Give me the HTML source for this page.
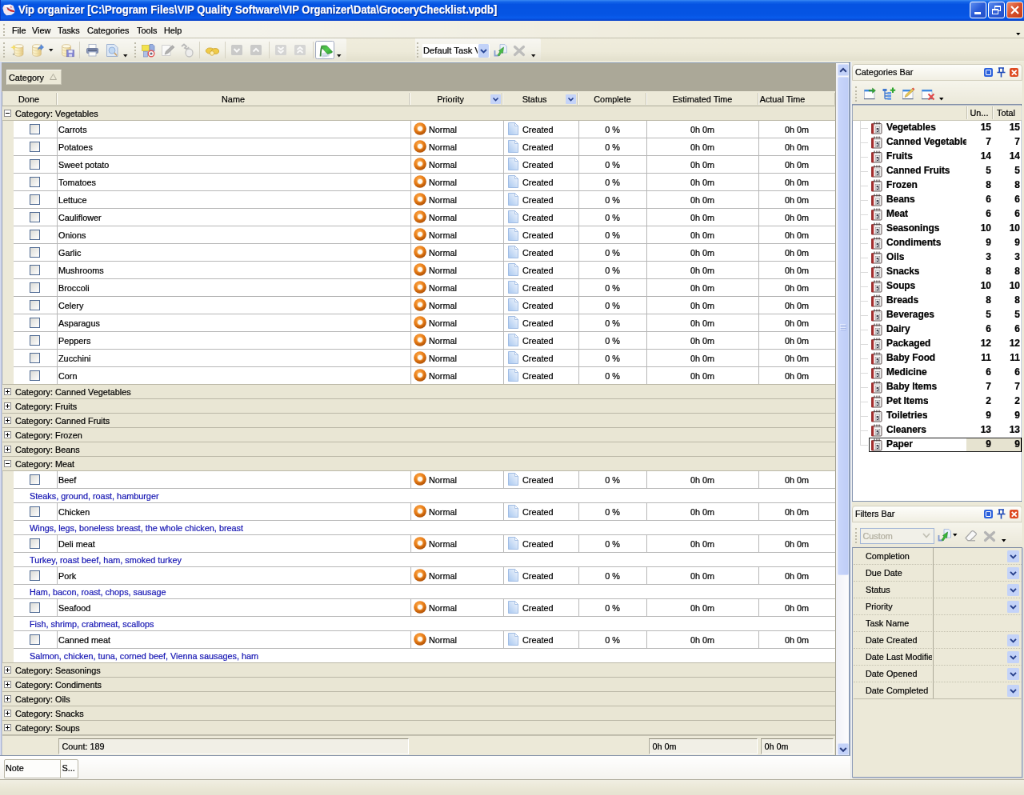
<!DOCTYPE html><html><head><meta charset="utf-8"><title>Vip organizer</title><style>
html,body{margin:0;padding:0;background:#ece9d8;overflow:hidden;}
body{width:1024px;height:795px;position:relative;}
#app{position:absolute;left:0;top:0;width:1280px;height:994px;transform:scale(.8);transform-origin:0 0;will-change:transform;font-family:"Liberation Sans",sans-serif;font-size:10.85px;color:#000;overflow:hidden;-webkit-text-stroke:0.22px;}
#app div,#app span{position:absolute;box-sizing:border-box;white-space:nowrap;}
.t{line-height:14px;height:14px;}
svg{position:absolute;overflow:visible;}
#title{left:0;top:0;width:1280px;height:25.5px;background:linear-gradient(#3a8af4 0,#1466ea 9%,#0553e2 22%,#0655e4 70%,#0a5cec 86%,#0746d2 97%,#0a3ec4 100%);border-left:1px solid #0838c0;}
#title .tt{left:22px;top:3.3px;color:#fff;font-weight:bold;font-size:14.4px;line-height:18px;height:18px;transform:scaleX(0.908);transform-origin:0 0;text-shadow:1px 1px 0 #0a2a8a;}
.wb{top:2px;width:21px;height:21px;border:1px solid #fff;border-radius:3px;background:linear-gradient(135deg,#5f8ff0,#2a5cd8 50%,#2450c8);}
#menu{left:0;top:25.5px;width:1280px;height:22.5px;background:linear-gradient(90deg,#f6f5ef 0,#f4f3eb 25%,#efecdc 70%);border-bottom:1px solid #c5c2b0;}
#tb{left:0;top:48px;width:1280px;height:29px;background:linear-gradient(#f0eddd,#edead9 60%,#e3e0cd);border-bottom:1px solid #efede0;}
.tbb{top:0;height:28px;background:linear-gradient(#f8f7f2,#f2f1e8 55%,#e6e3d4);border-radius:0 2px 2px 0;}
.grip{width:3px;border-left:2px dotted #bdbaa9;}
.sep{width:1px;background:#d6d3c4;}
.gl{background:#c0c0c0;}
.cat{left:2.5px;width:1042.5px;height:19px;margin-top:-1px;background:#e9e6d4;border-bottom:1px solid #bcb9a8;border-top:1px solid #bcb9a8;}
.row{left:17px;width:1028px;height:22px;background:#fff;border-bottom:1px solid #b8b8b8;}
.pv{left:17px;width:1028px;height:18px;background:#fff;border-bottom:1px solid #b8b8b8;color:#1717b4;}
.cb{left:20px;top:4px;width:13px;height:13px;border:1px solid #506b94;background:linear-gradient(135deg,#dcdcd7,#fff);}
.vl{top:0;width:1px;height:21px;background:#b8b8b8;}
.hd{top:114px;height:19px;background:#ece9d8;border-bottom:1px solid #c5c2b2;}
.dd{width:13px;height:12px;background:#c4d3f8;border-radius:1px;}
</style></head><body><div id="app">
<div id="title">
<svg style="left:2px;top:4.5px" width="16" height="15" viewBox="0 0 16 15"><path d="M2 1.2L10 0.4L13.5 2L15.6 8L14.8 11.2L11 13.8L5 14.2L1.8 11L0.3 5Z" fill="#f1e6ee"/><path d="M3 1.5L9 1L12 2.5L8 4L3 3.5Z" fill="#fdfbff"/><path d="M4.5 11.5L11 11.5L13 12.5L6 13.6Z" fill="#dfe6fb"/><path d="M5.5 4.6L9 6.4L14.8 8.2L15.2 10.2L10.5 9.4L6.6 7.2Z" fill="#c8242c"/><path d="M9.5 3L11 2.4L12 4.4L10.6 5Z" fill="#e0788a"/><path d="M5.6 4.4L8.5 5.8" stroke="#5a4a78" stroke-width="0.8"/></svg>
<span class="tt">Vip organizer [C:\Program Files\VIP Quality Software\VIP Organizer\Data\GroceryChecklist.vpdb]</span>
<div class="wb" style="left:1211px"><div style="left:5px;top:12px;width:8px;height:3px;background:#fff"></div></div>
<div class="wb" style="left:1234px"><div style="left:7px;top:4px;width:8px;height:7px;border:1px solid #fff;border-top-width:2px"></div><div style="left:4px;top:8px;width:8px;height:7px;border:1px solid #fff;border-top-width:2px;background:#3462d8"></div></div>
<div class="wb" style="left:1257px;background:linear-gradient(135deg,#ec8a6a,#d8502c 50%,#c43c18)"><svg style="left:4px;top:4px" width="11" height="11" viewBox="0 0 11 11"><path d="M1 1L10 10M10 1L1 10" stroke="#fff" stroke-width="2.2"/></svg></div>
</div>
<div id="menu">
<div class="grip" style="left:4px;top:4px;height:15px"></div>
<span class="t" style="left:15px;top:5.5px;">File</span>
<span class="t" style="left:40px;top:5.5px;">View</span>
<span class="t" style="left:72px;top:5.5px;">Tasks</span>
<span class="t" style="left:109px;top:5.5px;">Categories</span>
<span class="t" style="left:171px;top:5.5px;">Tools</span>
<span class="t" style="left:205px;top:5.5px;">Help</span>
<svg style="left:1270px;top:15px" width="5.5" height="3.2"><path d="M0 0H5.5L2.75 3.2Z" fill="#000"/></svg>
</div>
<div id="tb">
<div class="tbb" style="left:0;width:433px"></div><div class="tbb" style="left:519px;width:157px"></div>
<svg width="0" height="0"><defs><linearGradient id="cy" x1="0" x2="1"><stop offset="0" stop-color="#fdf6d6"/><stop offset="0.45" stop-color="#f8eab4"/><stop offset="1" stop-color="#e2c070"/></linearGradient><linearGradient id="dg" x1="1" y1="0" x2="0" y2="1"><stop offset="0" stop-color="#f4f8fe"/><stop offset="1" stop-color="#a9c8f0"/></linearGradient><radialGradient id="og" cx="0.4" cy="0.3" r="0.75"><stop offset="0" stop-color="#ffa848"/><stop offset="0.55" stop-color="#e67a14"/><stop offset="1" stop-color="#a84c04"/></radialGradient><linearGradient id="gb" x1="0" x2="1" y1="0" y2="1"><stop offset="0" stop-color="#2fa32c"/><stop offset="0.5" stop-color="#3fc63a"/><stop offset="1" stop-color="#148a18"/></linearGradient></defs></svg>
<div class="grip" style="left:4px;top:5px;height:19px"></div>
<svg style="left:14px;top:6.5px;opacity:.9" width="16" height="16" viewBox="0 0 16 16"><g transform="translate(3.6,0)"><path d="M0.6 2.8V12.8C0.6 14.4 3.2 15.3 6 15.3S11.4 14.4 11.4 12.8V2.8Z" fill="url(#cy)" stroke="#cdb274" stroke-width="0.7"/><ellipse cx="6" cy="2.8" rx="5.4" ry="2.1" fill="#fffbe6" stroke="#cdb274" stroke-width="0.7"/><path d="M0.6 6.3C0.6 7.9 3.2 8.7 6 8.7S11.4 7.9 11.4 6.3M0.6 9.7C0.6 11.3 3.2 12.1 6 12.1S11.4 11.3 11.4 9.7" fill="none" stroke="#e2cc8c" stroke-width="0.7"/></g><path d="M3 0.5L4 3.2L6.8 4.2L4 5.2L3 8L2 5.2L-0.8 4.2L2 3.2Z" fill="#f6dc58"/><path d="M1.5 13L3.6 11.5V14Z" fill="#8a8a78"/></svg>
<svg style="left:40px;top:6.5px;opacity:.9" width="16" height="16" viewBox="0 0 16 16"><path d="M0.6 2.8V12.8C0.6 14.4 3.2 15.3 6 15.3S11.4 14.4 11.4 12.8V2.8Z" fill="url(#cy)" stroke="#cdb274" stroke-width="0.7"/><ellipse cx="6" cy="2.8" rx="5.4" ry="2.1" fill="#fffbe6" stroke="#cdb274" stroke-width="0.7"/><path d="M0.6 6.3C0.6 7.9 3.2 8.7 6 8.7S11.4 7.9 11.4 6.3M0.6 9.7C0.6 11.3 3.2 12.1 6 12.1S11.4 11.3 11.4 9.7" fill="none" stroke="#e2cc8c" stroke-width="0.7"/><path d="M7.5 7C8 4.4 9.6 3 11 2.8V0.6L14.6 4L11 7.4V5.3C9.6 5.4 8.4 6 7.5 7Z" fill="#4a84dc" stroke="#2f5eb0" stroke-width="0.5"/></svg>
<svg style="left:61px;top:13px;opacity:.9" width="5.5" height="3.5" viewBox="0 0 5.5 3.5"><path d="M0 0H5.5L2.75 3.5Z" fill="#000"/></svg>
<svg style="left:77px;top:6.5px;opacity:.9" width="16" height="16" viewBox="0 0 16 16"><path d="M0.6 2.8V12.8C0.6 14.4 3.2 15.3 6 15.3S11.4 14.4 11.4 12.8V2.8Z" fill="url(#cy)" stroke="#cdb274" stroke-width="0.7"/><ellipse cx="6" cy="2.8" rx="5.4" ry="2.1" fill="#fffbe6" stroke="#cdb274" stroke-width="0.7"/><path d="M0.6 6.3C0.6 7.9 3.2 8.7 6 8.7S11.4 7.9 11.4 6.3M0.6 9.7C0.6 11.3 3.2 12.1 6 12.1S11.4 11.3 11.4 9.7" fill="none" stroke="#e2cc8c" stroke-width="0.7"/><rect x="6.6" y="7.6" width="9" height="8.2" fill="#7c7fd4" stroke="#5558a8" stroke-width="0.6"/><rect x="8.6" y="7.9" width="5" height="3" fill="#eeeefa"/><rect x="9.2" y="12.6" width="3.8" height="3" fill="#d8d8f0"/></svg>
<svg style="left:108px;top:7px;opacity:.9" width="15" height="16" viewBox="0 0 15 16"><rect x="3" y="0.5" width="9" height="5" fill="#fff" stroke="#9aa6c0" stroke-width="0.8"/><rect x="0.5" y="5.5" width="14" height="6" rx="1" fill="#7f8fb8" stroke="#56648c" stroke-width="0.8"/><rect x="2" y="7" width="11" height="1.5" fill="#3d4868"/><rect x="3" y="10" width="9" height="5" fill="#fff" stroke="#9aa6c0" stroke-width="0.8"/></svg>
<svg style="left:133px;top:7px;opacity:.9" width="15" height="16" viewBox="0 0 15 16"><path d="M0.5 0.5H10L14 4.5V15.5H0.5Z" fill="#dce8f8" stroke="#8fa6cc" stroke-width="0.9"/><circle cx="7" cy="8" r="4" fill="#bcd6f4" stroke="#86a8d8" stroke-width="0.9"/><path d="M10 11L13 14.5" stroke="#c89858" stroke-width="1.6"/></svg>
<svg style="left:153.5px;top:20px;opacity:.9" width="5.5" height="3.5" viewBox="0 0 5.5 3.5"><path d="M0 0H5.5L2.75 3.5Z" fill="#000"/></svg>
<div class="grip" style="left:168px;top:5px;height:19px"></div>
<svg style="left:177px;top:6.5px;opacity:.9" width="17" height="17" viewBox="0 0 17 17"><rect x="0.5" y="1.5" width="9" height="7" fill="#f4e23c" stroke="#c8b020" stroke-width="0.7"/><path d="M10 0.5H14L16 2.5V9H10Z" fill="#8fa8e0" stroke="#5f78b8" stroke-width="0.7"/><rect x="2.5" y="9.5" width="5" height="6.5" fill="#a8bce8" stroke="#6f88c0" stroke-width="0.7"/><circle cx="12" cy="12" r="3.8" fill="#fff" stroke="#e04848" stroke-width="1.4"/><circle cx="12" cy="12" r="1.6" fill="#5a5a70"/></svg>
<svg style="left:201.5px;top:7.5px;opacity:.9" width="17" height="14" viewBox="0 0 17 14"><path d="M0.5 0.5H11V13.5H0.5Z" fill="#fbfbfb" stroke="#c8c8c8" stroke-width="0.9"/><path d="M4 12L5.5 8L13.5 0.8L16 3L8 10.5Z" fill="#a9a9a9" stroke="#8c8c8c" stroke-width="0.6"/></svg>
<svg style="left:226px;top:6.5px;opacity:.9" width="16" height="17" viewBox="0 0 16 17"><path d="M1 3L4 0.5L7 3L5 5L8 6.5L10 4" fill="none" stroke="#b4b4b4" stroke-width="1.8"/><ellipse cx="10.5" cy="11" rx="4.5" ry="5" fill="#eeeeee" stroke="#bdbdbd" stroke-width="1.3"/></svg>
<div class="sep" style="left:99px;top:4px;height:21px"></div>
<div class="sep" style="left:249px;top:4px;height:21px"></div>
<svg style="left:256.5px;top:10.5px;opacity:.9" width="17" height="11" viewBox="0 0 17 11"><ellipse cx="5.5" cy="4.5" rx="5.2" ry="3.6" fill="#f0c838" stroke="#c89818" stroke-width="0.8"/><ellipse cx="12" cy="5" rx="4.6" ry="3.4" fill="#f0c838" stroke="#c89818" stroke-width="0.8"/><ellipse cx="8" cy="7.5" rx="2.6" ry="2.8" fill="#fff0b0" stroke="#c89818" stroke-width="0.7"/></svg>
<div class="sep" style="left:280.5px;top:4px;height:21px"></div>
<svg style="left:289px;top:8px;opacity:.9" width="14" height="13" viewBox="0 0 14 13"><rect x="0" y="0" width="14" height="13" rx="1.5" fill="#c6c6c6"/><path d="M3.5 5L7 8.5L10.5 5" fill="none" stroke="#fbfbfb" stroke-width="2"/></svg>
<svg style="left:313px;top:8px;opacity:.9" width="14" height="13" viewBox="0 0 14 13"><rect x="0" y="0" width="14" height="13" rx="1.5" fill="#c6c6c6"/><path d="M3.5 8.5L7 5L10.5 8.5" fill="none" stroke="#fbfbfb" stroke-width="2"/></svg>
<div class="sep" style="left:335.5px;top:4px;height:21px"></div>
<svg style="left:344px;top:8px;opacity:.9" width="14" height="13" viewBox="0 0 14 13"><rect x="0" y="0" width="14" height="13" rx="1.5" fill="#d2d2d2"/><path d="M3.5 3L7 6L10.5 3M3.5 7L7 10L10.5 7" fill="none" stroke="#fbfbfb" stroke-width="2"/></svg>
<svg style="left:368px;top:8px;opacity:.9" width="14" height="13" viewBox="0 0 14 13"><rect x="0" y="0" width="14" height="13" rx="1.5" fill="#d2d2d2"/><path d="M3.5 6L7 3L10.5 6M3.5 10L7 7L10.5 10" fill="none" stroke="#fbfbfb" stroke-width="2"/></svg>
<div class="sep" style="left:391px;top:4px;height:21px"></div>
<div style="left:393.8px;top:3.3px;width:24.2px;height:23px;background:#fff;border:1px solid #a0a9bf;border-radius:2.5px"></div>
<svg style="left:398.5px;top:9px;opacity:.9" width="17" height="15" viewBox="0 0 17 15"><path d="M3.4 9.9L11 8.5L12.6 10.4L12 13L3.8 14.3Z" fill="#dfe7f2" stroke="#aab8cc" stroke-width="0.5"/><path d="M4.5 12H11M4.5 13H10" stroke="#9fb0c8" stroke-width="0.5"/><path d="M2.5 0.7C1.6 3 1.2 6 0.7 13.4L2.5 13.4C2.7 9 3 6 3.8 3.3Z" fill="#1d7a20"/><path d="M2.5 0.4C4 -0.2 8 -0.2 9.5 0.2L16.6 7.7L15.7 9L10.5 10.6L3.8 3.3Z" fill="url(#gb)" stroke="#167018" stroke-width="0.6"/></svg>
<svg style="left:421px;top:19.75px;opacity:.9" width="5.5" height="3.5" viewBox="0 0 5.5 3.5"><path d="M0 0H5.5L2.75 3.5Z" fill="#000"/></svg>
<div class="grip" style="left:521px;top:5px;height:19px"></div>
<div style="left:527.5px;top:6.5px;width:84px;height:17.5px;background:#fff"></div>
<span class="t" style="left:529px;top:7.8px;font-size:11.2px;max-width:68px;overflow:hidden">Default Task V</span>
<div style="left:597.5px;top:7px;width:13.5px;height:16.5px;background:#c2d2f8;border-radius:1.5px"><svg style="left:2.5px;top:5.5px" width="9" height="6"><path d="M1 1L4.5 4.5L8 1" fill="none" stroke="#2a4898" stroke-width="1.9"/></svg></div>
<svg style="left:617px;top:6.5px;opacity:.9" width="17" height="17" viewBox="0 0 17 17"><path d="M8 0.5H14L16.5 3V11H8Z" fill="#e8f0fb" stroke="#9fb4d8" stroke-width="0.8"/><path d="M1.5 8V14.5H6" fill="none" stroke="#7f98d0" stroke-width="1.8"/><path d="M5 14L8 9.5L6.5 8.5L12.5 4L11.5 11.5L10 10.5L7 15Z" fill="#38b838" stroke="#1c7a1c" stroke-width="0.6"/></svg>
<svg style="left:641.5px;top:9px;opacity:.9" width="14" height="13" viewBox="0 0 14 13"><path d="M1.5 1.5L12.5 11.5M12.5 1.5L1.5 11.5" stroke="#b8b8b8" stroke-width="3.2" stroke-linecap="round"/></svg>
<svg style="left:664px;top:19.5px;opacity:.9" width="5.5" height="3.5" viewBox="0 0 5.5 3.5"><path d="M0 0H5.5L2.75 3.5Z" fill="#000"/></svg>
</div>
<div style="left:0;top:77px;width:1.6px;height:867px;background:#d3d9ee"></div><div style="left:1.5px;top:77.5px;width:1px;height:867px;background:#8e9bb8"></div><div style="left:1.5px;top:77.5px;width:1062px;height:1.4px;background:#8fa1ba"></div>
<div style="left:2px;top:79px;width:1043px;height:36px;background:#aba898"></div>
<div style="left:8px;top:87px;width:69px;height:19px;background:#ece9d8;border:1px solid #f8f7f0;border-right-color:#c8c5b5;border-bottom-color:#c8c5b5"></div>
<span class="t" style="left:11px;top:90px;">Category</span>
<svg style="left:62px;top:92px" width="9" height="8"><path d="M4.5 0.5L8.5 7.5H0.5Z" fill="#ece9d8" stroke="#b0ad9d"/></svg>
<div class="hd" style="left:3px;width:1042px"></div>
<div style="left:70px;top:116px;width:1px;height:15px;background:#c5c2b2"></div><div style="left:71px;top:116px;width:1px;height:15px;background:#fff"></div>
<div style="left:511px;top:116px;width:1px;height:15px;background:#c5c2b2"></div><div style="left:512px;top:116px;width:1px;height:15px;background:#fff"></div>
<div style="left:627px;top:116px;width:1px;height:15px;background:#c5c2b2"></div><div style="left:628px;top:116px;width:1px;height:15px;background:#fff"></div>
<div style="left:721px;top:116px;width:1px;height:15px;background:#c5c2b2"></div><div style="left:722px;top:116px;width:1px;height:15px;background:#fff"></div>
<div style="left:807px;top:116px;width:1px;height:15px;background:#c5c2b2"></div><div style="left:808px;top:116px;width:1px;height:15px;background:#fff"></div>
<div style="left:947px;top:116px;width:1px;height:15px;background:#c5c2b2"></div><div style="left:948px;top:116px;width:1px;height:15px;background:#fff"></div>
<div style="left:1043px;top:116px;width:1px;height:15px;background:#c5c2b2"></div><div style="left:1044px;top:116px;width:1px;height:15px;background:#fff"></div>
<span class="t" style="left:2px;width:68px;top:116.5px;text-align:center;">Done</span>
<span class="t" style="left:71px;width:441px;top:116.5px;text-align:center;">Name</span>
<span class="t" style="left:513px;width:100px;top:116.5px;text-align:center;">Priority</span>
<span class="t" style="left:629px;width:78px;top:116.5px;text-align:center;">Status</span>
<span class="t" style="left:723px;width:85px;top:116.5px;text-align:center;">Complete</span>
<span class="t" style="left:808px;width:140px;top:116.5px;text-align:center;">Estimated Time</span>
<span class="t" style="left:948px;width:60px;top:116.5px;text-align:center;">Actual Time</span>
<div class="dd" style="left:613px;top:118px"><svg style="left:3px;top:4px" width="7" height="5"><path d="M0.5 0.5L3.5 3.5L6.5 0.5" fill="none" stroke="#27408b" stroke-width="1.6"/></svg></div>
<div class="dd" style="left:707px;top:118px"><svg style="left:3px;top:4px" width="7" height="5"><path d="M0.5 0.5L3.5 3.5L6.5 0.5" fill="none" stroke="#27408b" stroke-width="1.6"/></svg></div>
<div class="cat" style="top:133px">
<div style="left:2.5px;top:3.5px;width:9px;height:9px;border:1px solid #8c8c8c;background:#fff"><div style="left:1px;top:3px;width:5px;height:1px;background:#000"></div></div>
<span class="t" style="left:16.5px;top:1.5px;">Category: Vegetables</span>
</div>
<div class="row" style="top:151px">
<div class="cb"></div>
<div class="vl" style="left:53.5px"></div>
<div class="vl" style="left:496px"></div>
<div class="vl" style="left:612px"></div>
<div class="vl" style="left:706px"></div>
<div class="vl" style="left:791px"></div>
<div class="vl" style="left:931px"></div>
<span class="t" style="left:56px;top:4px;">Carrots</span>
<svg style="left:500px;top:1.8px" width="16" height="16" viewBox="0 0 16 16"><circle cx="8" cy="8" r="7.8" fill="url(#og)"/><circle cx="8" cy="7.8" r="3.1" fill="#fffaf0"/><circle cx="8" cy="7.8" r="3.6" fill="none" stroke="#f8c080" stroke-width="0.8" opacity="0.7"/></svg>
<span class="t" style="left:519px;top:3.6px;">Normal</span>
<svg style="left:618px;top:2.2px" width="13" height="16" viewBox="0 0 13 16"><path d="M0.5 0.5H8.5L12.5 4.5V15.5H0.5Z" fill="url(#dg)" stroke="#9ab8e2" stroke-width="0.9"/><path d="M8.5 0.5V4.5H12.5Z" fill="#fff" stroke="#9ab8e2" stroke-width="0.8"/></svg>
<span class="t" style="left:636px;top:3.6px;">Created</span>
<span class="t" style="left:706px;width:85px;top:3.7px;text-align:center;">0 %</span>
<span class="t" style="left:791px;width:140px;top:3.7px;text-align:center;">0h 0m</span>
<span class="t" style="left:931px;width:96px;top:3.7px;text-align:center;">0h 0m</span>
</div>
<div class="row" style="top:173px">
<div class="cb"></div>
<div class="vl" style="left:53.5px"></div>
<div class="vl" style="left:496px"></div>
<div class="vl" style="left:612px"></div>
<div class="vl" style="left:706px"></div>
<div class="vl" style="left:791px"></div>
<div class="vl" style="left:931px"></div>
<span class="t" style="left:56px;top:4px;">Potatoes</span>
<svg style="left:500px;top:1.8px" width="16" height="16" viewBox="0 0 16 16"><circle cx="8" cy="8" r="7.8" fill="url(#og)"/><circle cx="8" cy="7.8" r="3.1" fill="#fffaf0"/><circle cx="8" cy="7.8" r="3.6" fill="none" stroke="#f8c080" stroke-width="0.8" opacity="0.7"/></svg>
<span class="t" style="left:519px;top:3.6px;">Normal</span>
<svg style="left:618px;top:2.2px" width="13" height="16" viewBox="0 0 13 16"><path d="M0.5 0.5H8.5L12.5 4.5V15.5H0.5Z" fill="url(#dg)" stroke="#9ab8e2" stroke-width="0.9"/><path d="M8.5 0.5V4.5H12.5Z" fill="#fff" stroke="#9ab8e2" stroke-width="0.8"/></svg>
<span class="t" style="left:636px;top:3.6px;">Created</span>
<span class="t" style="left:706px;width:85px;top:3.7px;text-align:center;">0 %</span>
<span class="t" style="left:791px;width:140px;top:3.7px;text-align:center;">0h 0m</span>
<span class="t" style="left:931px;width:96px;top:3.7px;text-align:center;">0h 0m</span>
</div>
<div class="row" style="top:195px">
<div class="cb"></div>
<div class="vl" style="left:53.5px"></div>
<div class="vl" style="left:496px"></div>
<div class="vl" style="left:612px"></div>
<div class="vl" style="left:706px"></div>
<div class="vl" style="left:791px"></div>
<div class="vl" style="left:931px"></div>
<span class="t" style="left:56px;top:4px;">Sweet potato</span>
<svg style="left:500px;top:1.8px" width="16" height="16" viewBox="0 0 16 16"><circle cx="8" cy="8" r="7.8" fill="url(#og)"/><circle cx="8" cy="7.8" r="3.1" fill="#fffaf0"/><circle cx="8" cy="7.8" r="3.6" fill="none" stroke="#f8c080" stroke-width="0.8" opacity="0.7"/></svg>
<span class="t" style="left:519px;top:3.6px;">Normal</span>
<svg style="left:618px;top:2.2px" width="13" height="16" viewBox="0 0 13 16"><path d="M0.5 0.5H8.5L12.5 4.5V15.5H0.5Z" fill="url(#dg)" stroke="#9ab8e2" stroke-width="0.9"/><path d="M8.5 0.5V4.5H12.5Z" fill="#fff" stroke="#9ab8e2" stroke-width="0.8"/></svg>
<span class="t" style="left:636px;top:3.6px;">Created</span>
<span class="t" style="left:706px;width:85px;top:3.7px;text-align:center;">0 %</span>
<span class="t" style="left:791px;width:140px;top:3.7px;text-align:center;">0h 0m</span>
<span class="t" style="left:931px;width:96px;top:3.7px;text-align:center;">0h 0m</span>
</div>
<div class="row" style="top:217px">
<div class="cb"></div>
<div class="vl" style="left:53.5px"></div>
<div class="vl" style="left:496px"></div>
<div class="vl" style="left:612px"></div>
<div class="vl" style="left:706px"></div>
<div class="vl" style="left:791px"></div>
<div class="vl" style="left:931px"></div>
<span class="t" style="left:56px;top:4px;">Tomatoes</span>
<svg style="left:500px;top:1.8px" width="16" height="16" viewBox="0 0 16 16"><circle cx="8" cy="8" r="7.8" fill="url(#og)"/><circle cx="8" cy="7.8" r="3.1" fill="#fffaf0"/><circle cx="8" cy="7.8" r="3.6" fill="none" stroke="#f8c080" stroke-width="0.8" opacity="0.7"/></svg>
<span class="t" style="left:519px;top:3.6px;">Normal</span>
<svg style="left:618px;top:2.2px" width="13" height="16" viewBox="0 0 13 16"><path d="M0.5 0.5H8.5L12.5 4.5V15.5H0.5Z" fill="url(#dg)" stroke="#9ab8e2" stroke-width="0.9"/><path d="M8.5 0.5V4.5H12.5Z" fill="#fff" stroke="#9ab8e2" stroke-width="0.8"/></svg>
<span class="t" style="left:636px;top:3.6px;">Created</span>
<span class="t" style="left:706px;width:85px;top:3.7px;text-align:center;">0 %</span>
<span class="t" style="left:791px;width:140px;top:3.7px;text-align:center;">0h 0m</span>
<span class="t" style="left:931px;width:96px;top:3.7px;text-align:center;">0h 0m</span>
</div>
<div class="row" style="top:239px">
<div class="cb"></div>
<div class="vl" style="left:53.5px"></div>
<div class="vl" style="left:496px"></div>
<div class="vl" style="left:612px"></div>
<div class="vl" style="left:706px"></div>
<div class="vl" style="left:791px"></div>
<div class="vl" style="left:931px"></div>
<span class="t" style="left:56px;top:4px;">Lettuce</span>
<svg style="left:500px;top:1.8px" width="16" height="16" viewBox="0 0 16 16"><circle cx="8" cy="8" r="7.8" fill="url(#og)"/><circle cx="8" cy="7.8" r="3.1" fill="#fffaf0"/><circle cx="8" cy="7.8" r="3.6" fill="none" stroke="#f8c080" stroke-width="0.8" opacity="0.7"/></svg>
<span class="t" style="left:519px;top:3.6px;">Normal</span>
<svg style="left:618px;top:2.2px" width="13" height="16" viewBox="0 0 13 16"><path d="M0.5 0.5H8.5L12.5 4.5V15.5H0.5Z" fill="url(#dg)" stroke="#9ab8e2" stroke-width="0.9"/><path d="M8.5 0.5V4.5H12.5Z" fill="#fff" stroke="#9ab8e2" stroke-width="0.8"/></svg>
<span class="t" style="left:636px;top:3.6px;">Created</span>
<span class="t" style="left:706px;width:85px;top:3.7px;text-align:center;">0 %</span>
<span class="t" style="left:791px;width:140px;top:3.7px;text-align:center;">0h 0m</span>
<span class="t" style="left:931px;width:96px;top:3.7px;text-align:center;">0h 0m</span>
</div>
<div class="row" style="top:261px">
<div class="cb"></div>
<div class="vl" style="left:53.5px"></div>
<div class="vl" style="left:496px"></div>
<div class="vl" style="left:612px"></div>
<div class="vl" style="left:706px"></div>
<div class="vl" style="left:791px"></div>
<div class="vl" style="left:931px"></div>
<span class="t" style="left:56px;top:4px;">Cauliflower</span>
<svg style="left:500px;top:1.8px" width="16" height="16" viewBox="0 0 16 16"><circle cx="8" cy="8" r="7.8" fill="url(#og)"/><circle cx="8" cy="7.8" r="3.1" fill="#fffaf0"/><circle cx="8" cy="7.8" r="3.6" fill="none" stroke="#f8c080" stroke-width="0.8" opacity="0.7"/></svg>
<span class="t" style="left:519px;top:3.6px;">Normal</span>
<svg style="left:618px;top:2.2px" width="13" height="16" viewBox="0 0 13 16"><path d="M0.5 0.5H8.5L12.5 4.5V15.5H0.5Z" fill="url(#dg)" stroke="#9ab8e2" stroke-width="0.9"/><path d="M8.5 0.5V4.5H12.5Z" fill="#fff" stroke="#9ab8e2" stroke-width="0.8"/></svg>
<span class="t" style="left:636px;top:3.6px;">Created</span>
<span class="t" style="left:706px;width:85px;top:3.7px;text-align:center;">0 %</span>
<span class="t" style="left:791px;width:140px;top:3.7px;text-align:center;">0h 0m</span>
<span class="t" style="left:931px;width:96px;top:3.7px;text-align:center;">0h 0m</span>
</div>
<div class="row" style="top:283px">
<div class="cb"></div>
<div class="vl" style="left:53.5px"></div>
<div class="vl" style="left:496px"></div>
<div class="vl" style="left:612px"></div>
<div class="vl" style="left:706px"></div>
<div class="vl" style="left:791px"></div>
<div class="vl" style="left:931px"></div>
<span class="t" style="left:56px;top:4px;">Onions</span>
<svg style="left:500px;top:1.8px" width="16" height="16" viewBox="0 0 16 16"><circle cx="8" cy="8" r="7.8" fill="url(#og)"/><circle cx="8" cy="7.8" r="3.1" fill="#fffaf0"/><circle cx="8" cy="7.8" r="3.6" fill="none" stroke="#f8c080" stroke-width="0.8" opacity="0.7"/></svg>
<span class="t" style="left:519px;top:3.6px;">Normal</span>
<svg style="left:618px;top:2.2px" width="13" height="16" viewBox="0 0 13 16"><path d="M0.5 0.5H8.5L12.5 4.5V15.5H0.5Z" fill="url(#dg)" stroke="#9ab8e2" stroke-width="0.9"/><path d="M8.5 0.5V4.5H12.5Z" fill="#fff" stroke="#9ab8e2" stroke-width="0.8"/></svg>
<span class="t" style="left:636px;top:3.6px;">Created</span>
<span class="t" style="left:706px;width:85px;top:3.7px;text-align:center;">0 %</span>
<span class="t" style="left:791px;width:140px;top:3.7px;text-align:center;">0h 0m</span>
<span class="t" style="left:931px;width:96px;top:3.7px;text-align:center;">0h 0m</span>
</div>
<div class="row" style="top:305px">
<div class="cb"></div>
<div class="vl" style="left:53.5px"></div>
<div class="vl" style="left:496px"></div>
<div class="vl" style="left:612px"></div>
<div class="vl" style="left:706px"></div>
<div class="vl" style="left:791px"></div>
<div class="vl" style="left:931px"></div>
<span class="t" style="left:56px;top:4px;">Garlic</span>
<svg style="left:500px;top:1.8px" width="16" height="16" viewBox="0 0 16 16"><circle cx="8" cy="8" r="7.8" fill="url(#og)"/><circle cx="8" cy="7.8" r="3.1" fill="#fffaf0"/><circle cx="8" cy="7.8" r="3.6" fill="none" stroke="#f8c080" stroke-width="0.8" opacity="0.7"/></svg>
<span class="t" style="left:519px;top:3.6px;">Normal</span>
<svg style="left:618px;top:2.2px" width="13" height="16" viewBox="0 0 13 16"><path d="M0.5 0.5H8.5L12.5 4.5V15.5H0.5Z" fill="url(#dg)" stroke="#9ab8e2" stroke-width="0.9"/><path d="M8.5 0.5V4.5H12.5Z" fill="#fff" stroke="#9ab8e2" stroke-width="0.8"/></svg>
<span class="t" style="left:636px;top:3.6px;">Created</span>
<span class="t" style="left:706px;width:85px;top:3.7px;text-align:center;">0 %</span>
<span class="t" style="left:791px;width:140px;top:3.7px;text-align:center;">0h 0m</span>
<span class="t" style="left:931px;width:96px;top:3.7px;text-align:center;">0h 0m</span>
</div>
<div class="row" style="top:327px">
<div class="cb"></div>
<div class="vl" style="left:53.5px"></div>
<div class="vl" style="left:496px"></div>
<div class="vl" style="left:612px"></div>
<div class="vl" style="left:706px"></div>
<div class="vl" style="left:791px"></div>
<div class="vl" style="left:931px"></div>
<span class="t" style="left:56px;top:4px;">Mushrooms</span>
<svg style="left:500px;top:1.8px" width="16" height="16" viewBox="0 0 16 16"><circle cx="8" cy="8" r="7.8" fill="url(#og)"/><circle cx="8" cy="7.8" r="3.1" fill="#fffaf0"/><circle cx="8" cy="7.8" r="3.6" fill="none" stroke="#f8c080" stroke-width="0.8" opacity="0.7"/></svg>
<span class="t" style="left:519px;top:3.6px;">Normal</span>
<svg style="left:618px;top:2.2px" width="13" height="16" viewBox="0 0 13 16"><path d="M0.5 0.5H8.5L12.5 4.5V15.5H0.5Z" fill="url(#dg)" stroke="#9ab8e2" stroke-width="0.9"/><path d="M8.5 0.5V4.5H12.5Z" fill="#fff" stroke="#9ab8e2" stroke-width="0.8"/></svg>
<span class="t" style="left:636px;top:3.6px;">Created</span>
<span class="t" style="left:706px;width:85px;top:3.7px;text-align:center;">0 %</span>
<span class="t" style="left:791px;width:140px;top:3.7px;text-align:center;">0h 0m</span>
<span class="t" style="left:931px;width:96px;top:3.7px;text-align:center;">0h 0m</span>
</div>
<div class="row" style="top:349px">
<div class="cb"></div>
<div class="vl" style="left:53.5px"></div>
<div class="vl" style="left:496px"></div>
<div class="vl" style="left:612px"></div>
<div class="vl" style="left:706px"></div>
<div class="vl" style="left:791px"></div>
<div class="vl" style="left:931px"></div>
<span class="t" style="left:56px;top:4px;">Broccoli</span>
<svg style="left:500px;top:1.8px" width="16" height="16" viewBox="0 0 16 16"><circle cx="8" cy="8" r="7.8" fill="url(#og)"/><circle cx="8" cy="7.8" r="3.1" fill="#fffaf0"/><circle cx="8" cy="7.8" r="3.6" fill="none" stroke="#f8c080" stroke-width="0.8" opacity="0.7"/></svg>
<span class="t" style="left:519px;top:3.6px;">Normal</span>
<svg style="left:618px;top:2.2px" width="13" height="16" viewBox="0 0 13 16"><path d="M0.5 0.5H8.5L12.5 4.5V15.5H0.5Z" fill="url(#dg)" stroke="#9ab8e2" stroke-width="0.9"/><path d="M8.5 0.5V4.5H12.5Z" fill="#fff" stroke="#9ab8e2" stroke-width="0.8"/></svg>
<span class="t" style="left:636px;top:3.6px;">Created</span>
<span class="t" style="left:706px;width:85px;top:3.7px;text-align:center;">0 %</span>
<span class="t" style="left:791px;width:140px;top:3.7px;text-align:center;">0h 0m</span>
<span class="t" style="left:931px;width:96px;top:3.7px;text-align:center;">0h 0m</span>
</div>
<div class="row" style="top:371px">
<div class="cb"></div>
<div class="vl" style="left:53.5px"></div>
<div class="vl" style="left:496px"></div>
<div class="vl" style="left:612px"></div>
<div class="vl" style="left:706px"></div>
<div class="vl" style="left:791px"></div>
<div class="vl" style="left:931px"></div>
<span class="t" style="left:56px;top:4px;">Celery</span>
<svg style="left:500px;top:1.8px" width="16" height="16" viewBox="0 0 16 16"><circle cx="8" cy="8" r="7.8" fill="url(#og)"/><circle cx="8" cy="7.8" r="3.1" fill="#fffaf0"/><circle cx="8" cy="7.8" r="3.6" fill="none" stroke="#f8c080" stroke-width="0.8" opacity="0.7"/></svg>
<span class="t" style="left:519px;top:3.6px;">Normal</span>
<svg style="left:618px;top:2.2px" width="13" height="16" viewBox="0 0 13 16"><path d="M0.5 0.5H8.5L12.5 4.5V15.5H0.5Z" fill="url(#dg)" stroke="#9ab8e2" stroke-width="0.9"/><path d="M8.5 0.5V4.5H12.5Z" fill="#fff" stroke="#9ab8e2" stroke-width="0.8"/></svg>
<span class="t" style="left:636px;top:3.6px;">Created</span>
<span class="t" style="left:706px;width:85px;top:3.7px;text-align:center;">0 %</span>
<span class="t" style="left:791px;width:140px;top:3.7px;text-align:center;">0h 0m</span>
<span class="t" style="left:931px;width:96px;top:3.7px;text-align:center;">0h 0m</span>
</div>
<div class="row" style="top:393px">
<div class="cb"></div>
<div class="vl" style="left:53.5px"></div>
<div class="vl" style="left:496px"></div>
<div class="vl" style="left:612px"></div>
<div class="vl" style="left:706px"></div>
<div class="vl" style="left:791px"></div>
<div class="vl" style="left:931px"></div>
<span class="t" style="left:56px;top:4px;">Asparagus</span>
<svg style="left:500px;top:1.8px" width="16" height="16" viewBox="0 0 16 16"><circle cx="8" cy="8" r="7.8" fill="url(#og)"/><circle cx="8" cy="7.8" r="3.1" fill="#fffaf0"/><circle cx="8" cy="7.8" r="3.6" fill="none" stroke="#f8c080" stroke-width="0.8" opacity="0.7"/></svg>
<span class="t" style="left:519px;top:3.6px;">Normal</span>
<svg style="left:618px;top:2.2px" width="13" height="16" viewBox="0 0 13 16"><path d="M0.5 0.5H8.5L12.5 4.5V15.5H0.5Z" fill="url(#dg)" stroke="#9ab8e2" stroke-width="0.9"/><path d="M8.5 0.5V4.5H12.5Z" fill="#fff" stroke="#9ab8e2" stroke-width="0.8"/></svg>
<span class="t" style="left:636px;top:3.6px;">Created</span>
<span class="t" style="left:706px;width:85px;top:3.7px;text-align:center;">0 %</span>
<span class="t" style="left:791px;width:140px;top:3.7px;text-align:center;">0h 0m</span>
<span class="t" style="left:931px;width:96px;top:3.7px;text-align:center;">0h 0m</span>
</div>
<div class="row" style="top:415px">
<div class="cb"></div>
<div class="vl" style="left:53.5px"></div>
<div class="vl" style="left:496px"></div>
<div class="vl" style="left:612px"></div>
<div class="vl" style="left:706px"></div>
<div class="vl" style="left:791px"></div>
<div class="vl" style="left:931px"></div>
<span class="t" style="left:56px;top:4px;">Peppers</span>
<svg style="left:500px;top:1.8px" width="16" height="16" viewBox="0 0 16 16"><circle cx="8" cy="8" r="7.8" fill="url(#og)"/><circle cx="8" cy="7.8" r="3.1" fill="#fffaf0"/><circle cx="8" cy="7.8" r="3.6" fill="none" stroke="#f8c080" stroke-width="0.8" opacity="0.7"/></svg>
<span class="t" style="left:519px;top:3.6px;">Normal</span>
<svg style="left:618px;top:2.2px" width="13" height="16" viewBox="0 0 13 16"><path d="M0.5 0.5H8.5L12.5 4.5V15.5H0.5Z" fill="url(#dg)" stroke="#9ab8e2" stroke-width="0.9"/><path d="M8.5 0.5V4.5H12.5Z" fill="#fff" stroke="#9ab8e2" stroke-width="0.8"/></svg>
<span class="t" style="left:636px;top:3.6px;">Created</span>
<span class="t" style="left:706px;width:85px;top:3.7px;text-align:center;">0 %</span>
<span class="t" style="left:791px;width:140px;top:3.7px;text-align:center;">0h 0m</span>
<span class="t" style="left:931px;width:96px;top:3.7px;text-align:center;">0h 0m</span>
</div>
<div class="row" style="top:437px">
<div class="cb"></div>
<div class="vl" style="left:53.5px"></div>
<div class="vl" style="left:496px"></div>
<div class="vl" style="left:612px"></div>
<div class="vl" style="left:706px"></div>
<div class="vl" style="left:791px"></div>
<div class="vl" style="left:931px"></div>
<span class="t" style="left:56px;top:4px;">Zucchini</span>
<svg style="left:500px;top:1.8px" width="16" height="16" viewBox="0 0 16 16"><circle cx="8" cy="8" r="7.8" fill="url(#og)"/><circle cx="8" cy="7.8" r="3.1" fill="#fffaf0"/><circle cx="8" cy="7.8" r="3.6" fill="none" stroke="#f8c080" stroke-width="0.8" opacity="0.7"/></svg>
<span class="t" style="left:519px;top:3.6px;">Normal</span>
<svg style="left:618px;top:2.2px" width="13" height="16" viewBox="0 0 13 16"><path d="M0.5 0.5H8.5L12.5 4.5V15.5H0.5Z" fill="url(#dg)" stroke="#9ab8e2" stroke-width="0.9"/><path d="M8.5 0.5V4.5H12.5Z" fill="#fff" stroke="#9ab8e2" stroke-width="0.8"/></svg>
<span class="t" style="left:636px;top:3.6px;">Created</span>
<span class="t" style="left:706px;width:85px;top:3.7px;text-align:center;">0 %</span>
<span class="t" style="left:791px;width:140px;top:3.7px;text-align:center;">0h 0m</span>
<span class="t" style="left:931px;width:96px;top:3.7px;text-align:center;">0h 0m</span>
</div>
<div class="row" style="top:459px">
<div class="cb"></div>
<div class="vl" style="left:53.5px"></div>
<div class="vl" style="left:496px"></div>
<div class="vl" style="left:612px"></div>
<div class="vl" style="left:706px"></div>
<div class="vl" style="left:791px"></div>
<div class="vl" style="left:931px"></div>
<span class="t" style="left:56px;top:4px;">Corn</span>
<svg style="left:500px;top:1.8px" width="16" height="16" viewBox="0 0 16 16"><circle cx="8" cy="8" r="7.8" fill="url(#og)"/><circle cx="8" cy="7.8" r="3.1" fill="#fffaf0"/><circle cx="8" cy="7.8" r="3.6" fill="none" stroke="#f8c080" stroke-width="0.8" opacity="0.7"/></svg>
<span class="t" style="left:519px;top:3.6px;">Normal</span>
<svg style="left:618px;top:2.2px" width="13" height="16" viewBox="0 0 13 16"><path d="M0.5 0.5H8.5L12.5 4.5V15.5H0.5Z" fill="url(#dg)" stroke="#9ab8e2" stroke-width="0.9"/><path d="M8.5 0.5V4.5H12.5Z" fill="#fff" stroke="#9ab8e2" stroke-width="0.8"/></svg>
<span class="t" style="left:636px;top:3.6px;">Created</span>
<span class="t" style="left:706px;width:85px;top:3.7px;text-align:center;">0 %</span>
<span class="t" style="left:791px;width:140px;top:3.7px;text-align:center;">0h 0m</span>
<span class="t" style="left:931px;width:96px;top:3.7px;text-align:center;">0h 0m</span>
</div>
<div class="cat" style="top:481px">
<div style="left:2.5px;top:3.5px;width:9px;height:9px;border:1px solid #8c8c8c;background:#fff"><div style="left:1px;top:3px;width:5px;height:1px;background:#000"></div><div style="left:3px;top:1px;width:1px;height:5px;background:#000"></div></div>
<span class="t" style="left:16.5px;top:1.5px;">Category: Canned Vegetables</span>
</div>
<div class="cat" style="top:499px">
<div style="left:2.5px;top:3.5px;width:9px;height:9px;border:1px solid #8c8c8c;background:#fff"><div style="left:1px;top:3px;width:5px;height:1px;background:#000"></div><div style="left:3px;top:1px;width:1px;height:5px;background:#000"></div></div>
<span class="t" style="left:16.5px;top:1.5px;">Category: Fruits</span>
</div>
<div class="cat" style="top:517px">
<div style="left:2.5px;top:3.5px;width:9px;height:9px;border:1px solid #8c8c8c;background:#fff"><div style="left:1px;top:3px;width:5px;height:1px;background:#000"></div><div style="left:3px;top:1px;width:1px;height:5px;background:#000"></div></div>
<span class="t" style="left:16.5px;top:1.5px;">Category: Canned Fruits</span>
</div>
<div class="cat" style="top:535px">
<div style="left:2.5px;top:3.5px;width:9px;height:9px;border:1px solid #8c8c8c;background:#fff"><div style="left:1px;top:3px;width:5px;height:1px;background:#000"></div><div style="left:3px;top:1px;width:1px;height:5px;background:#000"></div></div>
<span class="t" style="left:16.5px;top:1.5px;">Category: Frozen</span>
</div>
<div class="cat" style="top:553px">
<div style="left:2.5px;top:3.5px;width:9px;height:9px;border:1px solid #8c8c8c;background:#fff"><div style="left:1px;top:3px;width:5px;height:1px;background:#000"></div><div style="left:3px;top:1px;width:1px;height:5px;background:#000"></div></div>
<span class="t" style="left:16.5px;top:1.5px;">Category: Beans</span>
</div>
<div class="cat" style="top:571px">
<div style="left:2.5px;top:3.5px;width:9px;height:9px;border:1px solid #8c8c8c;background:#fff"><div style="left:1px;top:3px;width:5px;height:1px;background:#000"></div></div>
<span class="t" style="left:16.5px;top:1.5px;">Category: Meat</span>
</div>
<div class="row" style="top:589px">
<div class="cb"></div>
<div class="vl" style="left:53.5px"></div>
<div class="vl" style="left:496px"></div>
<div class="vl" style="left:612px"></div>
<div class="vl" style="left:706px"></div>
<div class="vl" style="left:791px"></div>
<div class="vl" style="left:931px"></div>
<span class="t" style="left:56px;top:4px;">Beef</span>
<svg style="left:500px;top:1.8px" width="16" height="16" viewBox="0 0 16 16"><circle cx="8" cy="8" r="7.8" fill="url(#og)"/><circle cx="8" cy="7.8" r="3.1" fill="#fffaf0"/><circle cx="8" cy="7.8" r="3.6" fill="none" stroke="#f8c080" stroke-width="0.8" opacity="0.7"/></svg>
<span class="t" style="left:519px;top:3.6px;">Normal</span>
<svg style="left:618px;top:2.2px" width="13" height="16" viewBox="0 0 13 16"><path d="M0.5 0.5H8.5L12.5 4.5V15.5H0.5Z" fill="url(#dg)" stroke="#9ab8e2" stroke-width="0.9"/><path d="M8.5 0.5V4.5H12.5Z" fill="#fff" stroke="#9ab8e2" stroke-width="0.8"/></svg>
<span class="t" style="left:636px;top:3.6px;">Created</span>
<span class="t" style="left:706px;width:85px;top:3.7px;text-align:center;">0 %</span>
<span class="t" style="left:791px;width:140px;top:3.7px;text-align:center;">0h 0m</span>
<span class="t" style="left:931px;width:96px;top:3.7px;text-align:center;">0h 0m</span>
</div>
<div class="pv" style="top:611px">
<span class="t" style="left:20px;top:2px;">Steaks, ground, roast, hamburger</span>
</div>
<div class="row" style="top:629px">
<div class="cb"></div>
<div class="vl" style="left:53.5px"></div>
<div class="vl" style="left:496px"></div>
<div class="vl" style="left:612px"></div>
<div class="vl" style="left:706px"></div>
<div class="vl" style="left:791px"></div>
<div class="vl" style="left:931px"></div>
<span class="t" style="left:56px;top:4px;">Chicken</span>
<svg style="left:500px;top:1.8px" width="16" height="16" viewBox="0 0 16 16"><circle cx="8" cy="8" r="7.8" fill="url(#og)"/><circle cx="8" cy="7.8" r="3.1" fill="#fffaf0"/><circle cx="8" cy="7.8" r="3.6" fill="none" stroke="#f8c080" stroke-width="0.8" opacity="0.7"/></svg>
<span class="t" style="left:519px;top:3.6px;">Normal</span>
<svg style="left:618px;top:2.2px" width="13" height="16" viewBox="0 0 13 16"><path d="M0.5 0.5H8.5L12.5 4.5V15.5H0.5Z" fill="url(#dg)" stroke="#9ab8e2" stroke-width="0.9"/><path d="M8.5 0.5V4.5H12.5Z" fill="#fff" stroke="#9ab8e2" stroke-width="0.8"/></svg>
<span class="t" style="left:636px;top:3.6px;">Created</span>
<span class="t" style="left:706px;width:85px;top:3.7px;text-align:center;">0 %</span>
<span class="t" style="left:791px;width:140px;top:3.7px;text-align:center;">0h 0m</span>
<span class="t" style="left:931px;width:96px;top:3.7px;text-align:center;">0h 0m</span>
</div>
<div class="pv" style="top:651px">
<span class="t" style="left:20px;top:2px;">Wings, legs, boneless breast, the whole chicken, breast</span>
</div>
<div class="row" style="top:669px">
<div class="cb"></div>
<div class="vl" style="left:53.5px"></div>
<div class="vl" style="left:496px"></div>
<div class="vl" style="left:612px"></div>
<div class="vl" style="left:706px"></div>
<div class="vl" style="left:791px"></div>
<div class="vl" style="left:931px"></div>
<span class="t" style="left:56px;top:4px;">Deli meat</span>
<svg style="left:500px;top:1.8px" width="16" height="16" viewBox="0 0 16 16"><circle cx="8" cy="8" r="7.8" fill="url(#og)"/><circle cx="8" cy="7.8" r="3.1" fill="#fffaf0"/><circle cx="8" cy="7.8" r="3.6" fill="none" stroke="#f8c080" stroke-width="0.8" opacity="0.7"/></svg>
<span class="t" style="left:519px;top:3.6px;">Normal</span>
<svg style="left:618px;top:2.2px" width="13" height="16" viewBox="0 0 13 16"><path d="M0.5 0.5H8.5L12.5 4.5V15.5H0.5Z" fill="url(#dg)" stroke="#9ab8e2" stroke-width="0.9"/><path d="M8.5 0.5V4.5H12.5Z" fill="#fff" stroke="#9ab8e2" stroke-width="0.8"/></svg>
<span class="t" style="left:636px;top:3.6px;">Created</span>
<span class="t" style="left:706px;width:85px;top:3.7px;text-align:center;">0 %</span>
<span class="t" style="left:791px;width:140px;top:3.7px;text-align:center;">0h 0m</span>
<span class="t" style="left:931px;width:96px;top:3.7px;text-align:center;">0h 0m</span>
</div>
<div class="pv" style="top:691px">
<span class="t" style="left:20px;top:2px;">Turkey, roast beef, ham, smoked turkey</span>
</div>
<div class="row" style="top:709px">
<div class="cb"></div>
<div class="vl" style="left:53.5px"></div>
<div class="vl" style="left:496px"></div>
<div class="vl" style="left:612px"></div>
<div class="vl" style="left:706px"></div>
<div class="vl" style="left:791px"></div>
<div class="vl" style="left:931px"></div>
<span class="t" style="left:56px;top:4px;">Pork</span>
<svg style="left:500px;top:1.8px" width="16" height="16" viewBox="0 0 16 16"><circle cx="8" cy="8" r="7.8" fill="url(#og)"/><circle cx="8" cy="7.8" r="3.1" fill="#fffaf0"/><circle cx="8" cy="7.8" r="3.6" fill="none" stroke="#f8c080" stroke-width="0.8" opacity="0.7"/></svg>
<span class="t" style="left:519px;top:3.6px;">Normal</span>
<svg style="left:618px;top:2.2px" width="13" height="16" viewBox="0 0 13 16"><path d="M0.5 0.5H8.5L12.5 4.5V15.5H0.5Z" fill="url(#dg)" stroke="#9ab8e2" stroke-width="0.9"/><path d="M8.5 0.5V4.5H12.5Z" fill="#fff" stroke="#9ab8e2" stroke-width="0.8"/></svg>
<span class="t" style="left:636px;top:3.6px;">Created</span>
<span class="t" style="left:706px;width:85px;top:3.7px;text-align:center;">0 %</span>
<span class="t" style="left:791px;width:140px;top:3.7px;text-align:center;">0h 0m</span>
<span class="t" style="left:931px;width:96px;top:3.7px;text-align:center;">0h 0m</span>
</div>
<div class="pv" style="top:731px">
<span class="t" style="left:20px;top:2px;">Ham, bacon, roast, chops, sausage</span>
</div>
<div class="row" style="top:749px">
<div class="cb"></div>
<div class="vl" style="left:53.5px"></div>
<div class="vl" style="left:496px"></div>
<div class="vl" style="left:612px"></div>
<div class="vl" style="left:706px"></div>
<div class="vl" style="left:791px"></div>
<div class="vl" style="left:931px"></div>
<span class="t" style="left:56px;top:4px;">Seafood</span>
<svg style="left:500px;top:1.8px" width="16" height="16" viewBox="0 0 16 16"><circle cx="8" cy="8" r="7.8" fill="url(#og)"/><circle cx="8" cy="7.8" r="3.1" fill="#fffaf0"/><circle cx="8" cy="7.8" r="3.6" fill="none" stroke="#f8c080" stroke-width="0.8" opacity="0.7"/></svg>
<span class="t" style="left:519px;top:3.6px;">Normal</span>
<svg style="left:618px;top:2.2px" width="13" height="16" viewBox="0 0 13 16"><path d="M0.5 0.5H8.5L12.5 4.5V15.5H0.5Z" fill="url(#dg)" stroke="#9ab8e2" stroke-width="0.9"/><path d="M8.5 0.5V4.5H12.5Z" fill="#fff" stroke="#9ab8e2" stroke-width="0.8"/></svg>
<span class="t" style="left:636px;top:3.6px;">Created</span>
<span class="t" style="left:706px;width:85px;top:3.7px;text-align:center;">0 %</span>
<span class="t" style="left:791px;width:140px;top:3.7px;text-align:center;">0h 0m</span>
<span class="t" style="left:931px;width:96px;top:3.7px;text-align:center;">0h 0m</span>
</div>
<div class="pv" style="top:771px">
<span class="t" style="left:20px;top:2px;">Fish, shrimp, crabmeat, scallops</span>
</div>
<div class="row" style="top:789px">
<div class="cb"></div>
<div class="vl" style="left:53.5px"></div>
<div class="vl" style="left:496px"></div>
<div class="vl" style="left:612px"></div>
<div class="vl" style="left:706px"></div>
<div class="vl" style="left:791px"></div>
<div class="vl" style="left:931px"></div>
<span class="t" style="left:56px;top:4px;">Canned meat</span>
<svg style="left:500px;top:1.8px" width="16" height="16" viewBox="0 0 16 16"><circle cx="8" cy="8" r="7.8" fill="url(#og)"/><circle cx="8" cy="7.8" r="3.1" fill="#fffaf0"/><circle cx="8" cy="7.8" r="3.6" fill="none" stroke="#f8c080" stroke-width="0.8" opacity="0.7"/></svg>
<span class="t" style="left:519px;top:3.6px;">Normal</span>
<svg style="left:618px;top:2.2px" width="13" height="16" viewBox="0 0 13 16"><path d="M0.5 0.5H8.5L12.5 4.5V15.5H0.5Z" fill="url(#dg)" stroke="#9ab8e2" stroke-width="0.9"/><path d="M8.5 0.5V4.5H12.5Z" fill="#fff" stroke="#9ab8e2" stroke-width="0.8"/></svg>
<span class="t" style="left:636px;top:3.6px;">Created</span>
<span class="t" style="left:706px;width:85px;top:3.7px;text-align:center;">0 %</span>
<span class="t" style="left:791px;width:140px;top:3.7px;text-align:center;">0h 0m</span>
<span class="t" style="left:931px;width:96px;top:3.7px;text-align:center;">0h 0m</span>
</div>
<div class="pv" style="top:811px">
<span class="t" style="left:20px;top:2px;">Salmon, chicken, tuna, corned beef, Vienna sausages, ham</span>
</div>
<div class="cat" style="top:829px">
<div style="left:2.5px;top:3.5px;width:9px;height:9px;border:1px solid #8c8c8c;background:#fff"><div style="left:1px;top:3px;width:5px;height:1px;background:#000"></div><div style="left:3px;top:1px;width:1px;height:5px;background:#000"></div></div>
<span class="t" style="left:16.5px;top:1.5px;">Category: Seasonings</span>
</div>
<div class="cat" style="top:847px">
<div style="left:2.5px;top:3.5px;width:9px;height:9px;border:1px solid #8c8c8c;background:#fff"><div style="left:1px;top:3px;width:5px;height:1px;background:#000"></div><div style="left:3px;top:1px;width:1px;height:5px;background:#000"></div></div>
<span class="t" style="left:16.5px;top:1.5px;">Category: Condiments</span>
</div>
<div class="cat" style="top:865px">
<div style="left:2.5px;top:3.5px;width:9px;height:9px;border:1px solid #8c8c8c;background:#fff"><div style="left:1px;top:3px;width:5px;height:1px;background:#000"></div><div style="left:3px;top:1px;width:1px;height:5px;background:#000"></div></div>
<span class="t" style="left:16.5px;top:1.5px;">Category: Oils</span>
</div>
<div class="cat" style="top:883px">
<div style="left:2.5px;top:3.5px;width:9px;height:9px;border:1px solid #8c8c8c;background:#fff"><div style="left:1px;top:3px;width:5px;height:1px;background:#000"></div><div style="left:3px;top:1px;width:1px;height:5px;background:#000"></div></div>
<span class="t" style="left:16.5px;top:1.5px;">Category: Snacks</span>
</div>
<div class="cat" style="top:901px">
<div style="left:2.5px;top:3.5px;width:9px;height:9px;border:1px solid #8c8c8c;background:#fff"><div style="left:1px;top:3px;width:5px;height:1px;background:#000"></div><div style="left:3px;top:1px;width:1px;height:5px;background:#000"></div></div>
<span class="t" style="left:16.5px;top:1.5px;">Category: Soups</span>
</div>
<div style="left:3px;top:919px;width:1042px;height:25px;background:#ece9d8;border-top:1px solid #c5c2b2"></div>
<div style="left:72.5px;top:923px;width:438px;height:19.5px;border:1px solid #aeab9b;border-right-color:#fff;border-bottom-color:#fff;background:#f1efe6"></div>
<span class="t" style="left:77.5px;top:926px;">Count: 189</span>
<div style="left:810.5px;top:923px;width:136px;height:19.5px;border:1px solid #aeab9b;border-right-color:#fff;border-bottom-color:#fff;background:#f1efe6"></div>
<span class="t" style="left:815.5px;top:926px;">0h 0m</span>
<div style="left:950.5px;top:923px;width:91px;height:19.5px;border:1px solid #aeab9b;border-right-color:#fff;border-bottom-color:#fff;background:#f1efe6"></div>
<span class="t" style="left:955.5px;top:926px;">0h 0m</span>
<div style="left:0;top:943.5px;width:1063px;height:32px;background:linear-gradient(#ffffff,#f4f3ee);border-top:1.4px solid #8390a8"></div>
<div style="left:5px;top:948.5px;width:93px;height:24px;background:#fdfdfb;border:1px solid #b9b6a6;border-radius:2px 2px 0 0"></div>
<span class="t" style="left:7px;top:953px;">Note</span>
<span class="t" style="left:77.5px;top:953px;">S...</span>
<div style="left:75px;top:948.5px;width:1px;height:24px;background:#b9b6a6"></div>
<div style="left:0;top:973.5px;width:1280px;height:1px;background:#b0ad9d"></div>
<div style="left:1045px;top:79px;width:17px;height:865px;background:linear-gradient(90deg,#f1f2f8,#fdfdfe)"></div>
<div style="left:1046.5px;top:95.5px;width:14px;height:623px;background:linear-gradient(90deg,#c9d6fb,#bfcef7);border-radius:1.5px;border:1px solid #d6e0fc"></div>
<div style="left:1046.5px;top:79.5px;width:14px;height:15px;background:#c3d2f9;border:1px solid #dbe4fd;border-radius:2px"><svg style="left:1.2px;top:3px" width="10" height="8"><path d="M1.2 5.8L5 2L8.8 5.8" fill="none" stroke="#2b3f80" stroke-width="2"/></svg></div>
<div style="left:1046.5px;top:928.5px;width:14px;height:15px;background:#c3d2f9;border:1px solid #dbe4fd;border-radius:2px"><svg style="left:1.2px;top:3px" width="10" height="8"><path d="M1.2 2L5 5.8L8.8 2" fill="none" stroke="#2b3f80" stroke-width="2"/></svg></div>
<div style="left:1061.4px;top:78px;width:2px;height:867px;background:#8c9db8"></div>
<div style="left:1044.2px;top:114px;width:1px;height:830px;background:#aaa798"></div>
<div style="left:1063.4px;top:78px;width:1.8px;height:896px;background:#eceef0"></div>
<div style="left:1050px;top:405px;width:7px;height:1px;background:#e6edff"></div><div style="left:1051px;top:406px;width:7px;height:1px;background:#a4b6e8"></div>
<div style="left:1050px;top:407px;width:7px;height:1px;background:#e6edff"></div><div style="left:1051px;top:408px;width:7px;height:1px;background:#a4b6e8"></div>
<div style="left:1050px;top:409px;width:7px;height:1px;background:#e6edff"></div><div style="left:1051px;top:410px;width:7px;height:1px;background:#a4b6e8"></div>
<div style="left:1050px;top:411px;width:7px;height:1px;background:#e6edff"></div><div style="left:1051px;top:412px;width:7px;height:1px;background:#a4b6e8"></div>
<div style="left:1058px;top:405px;width:0;height:0"></div>
<div style="left:1065px;top:80px;width:213px;height:21px;background:linear-gradient(#fefefb,#f1efe3);border:1px solid #d0cdbd;border-radius:4px 4px 0 0"></div>
<span class="t" style="left:1069px;top:83px;">Categories Bar</span>
<div style="left:1229.5px;top:85px;width:11.5px;height:11px;background:#2d62dc;border-radius:2px"><div style="left:2.2px;top:2.2px;width:7px;height:6.6px;border:1.6px solid #fff;border-radius:1px"></div></div>
<svg style="left:1245.5px;top:84px" width="11" height="13" viewBox="0 0 11 13"><path d="M2 1H9M3.2 1V6M7.8 1V6M0.5 6.5H10.5M5.5 7V12.5" stroke="#1c48b8" stroke-width="1.6" fill="none"/></svg>
<div style="left:1261.5px;top:85px;width:11.5px;height:11px;background:#de4b22;border-radius:2px"><svg style="left:2px;top:1.8px" width="7.5" height="7.5"><path d="M0.8 0.8L6.7 6.7M6.7 0.8L0.8 6.7" stroke="#fff" stroke-width="1.9"/></svg></div>
<div style="left:1065px;top:101px;width:213px;height:30px;background:linear-gradient(#f6f5ec,#ebe8d9)"></div>
<div class="grip" style="left:1069px;top:108px;height:19px"></div>
<svg style="left:1080px;top:108.5px" width="16" height="16" viewBox="0 0 16 16"><rect x="0.5" y="3.5" width="12.5" height="11" fill="#fdfdfd" stroke="#a8b4cc" stroke-width="0.8"/><rect x="0.5" y="3" width="12.5" height="2.4" fill="#3f8ae0"/><path d="M0 14.6H13.5" stroke="#60708c" stroke-width="1.2"/><path d="M6 3.5H10.5V1L14.5 4.2L10.5 7.4V5H6Z" fill="#36a636" stroke="#1f7a1f" stroke-width="0.4"/></svg>
<svg style="left:1102.5px;top:108.5px" width="17" height="16" viewBox="0 0 17 16"><path d="M3 4V14.5M3 7.5H7M3 11H7M3 14.5H7" stroke="#3f78d0" stroke-width="1.3" fill="none"/><rect x="0.5" y="2" width="5" height="3" fill="#3f78d0"/><rect x="6.5" y="6" width="4.5" height="2.6" fill="#5f98e8"/><rect x="6.5" y="9.6" width="4.5" height="2.6" fill="#5f98e8"/><rect x="6.5" y="13.2" width="4.5" height="2.6" fill="#5f98e8"/><path d="M13 0.5V7M9.8 3.7H16.2" stroke="#2fa62f" stroke-width="2"/></svg>
<svg style="left:1128px;top:108.5px" width="16" height="16" viewBox="0 0 16 16"><rect x="0.5" y="3.5" width="12.5" height="11" fill="#fdfdfd" stroke="#a8b4cc" stroke-width="0.8"/><rect x="0.5" y="3" width="12.5" height="2.4" fill="#3f8ae0"/><path d="M0 14.6H13.5" stroke="#60708c" stroke-width="1.2"/><path d="M3 12.5L4.5 9L13 1L15 3L6.5 11Z" fill="#e8c858" stroke="#a88828" stroke-width="0.5"/><path d="M12 2L13.5 0.6L15.4 2.4L14 3.8Z" fill="#e05050"/></svg>
<svg style="left:1151.5px;top:108.5px" width="17" height="17" viewBox="0 0 17 17"><rect x="0.5" y="3.5" width="12.5" height="11" fill="#fdfdfd" stroke="#a8b4cc" stroke-width="0.8"/><rect x="0.5" y="3" width="12.5" height="2.4" fill="#3f8ae0"/><path d="M0 14.6H13.5" stroke="#60708c" stroke-width="1.2"/><path d="M8.5 8.5L15.5 15.5M15.5 8.5L8.5 15.5" stroke="#e04848" stroke-width="2"/></svg>
<svg style="left:1174px;top:121.75px" width="5.5" height="3.5" viewBox="0 0 5.5 3.5"><path d="M0 0H5.5L2.75 3.5Z" fill="#000"/></svg>
<div style="left:1065px;top:130px;width:213px;height:497px;background:#fff;border:1px solid #8796b2;border-top:2px solid #8a96ac"></div>
<div style="left:1066px;top:132px;width:211px;height:18.6px;background:#ece9d8;border-bottom:1px solid #cbc8b8"></div>
<div style="left:1207.5px;top:133px;width:1px;height:16px;background:#c5c2b2"></div><div style="left:1208.5px;top:133px;width:1px;height:16px;background:#fbfaf4"></div><div style="left:1239.5px;top:133px;width:1px;height:16px;background:#c5c2b2"></div><div style="left:1240.5px;top:133px;width:1px;height:16px;background:#fbfaf4"></div>
<span class="t" style="left:1212.5px;top:134px;">Un...</span>
<span class="t" style="left:1246px;top:134px;">Total</span>
<div style="left:1075px;top:159.5px;width:10px;height:1px;background:#dadada"></div>
<svg style="left:1088.5px;top:151.8px" width="14" height="15.6" viewBox="0 0 14 15.6"><rect x="1" y="2.6" width="12" height="12.4" rx="1" fill="#fdfdfd" stroke="#5a4a4a" stroke-width="1"/><rect x="0.3" y="2.4" width="3" height="12.8" rx="0.8" fill="#b83838"/><rect x="0.3" y="2.4" width="1.2" height="12.8" fill="#8a2424"/><path d="M4 0.4V3.4M7 0.4V3.4M10 0.4V3.4" stroke="#4a3a3a" stroke-width="1.1"/><path d="M3.3 4.4H12.5" stroke="#c8c8c8" stroke-width="0.8"/><rect x="5.2" y="6.6" width="5.6" height="7" fill="#f2f2f2" stroke="#8a8a8a" stroke-width="0.6"/><text x="8" y="12.6" font-family="Liberation Sans, sans-serif" font-size="6.6" font-weight="bold" text-anchor="middle" fill="#223">5</text></svg>
<span class="t" style="left:1108px;top:152px;font-weight:bold;font-size:12px;letter-spacing:-0.1px;max-width:99.5px;overflow:hidden;">Vegetables</span>
<span class="t" style="left:1208px;width:31px;top:152px;text-align:right;font-weight:bold;font-size:12px;">15</span>
<span class="t" style="left:1243px;width:32px;top:152px;text-align:right;font-weight:bold;font-size:12px;">15</span>
<div style="left:1075px;top:177.5px;width:10px;height:1px;background:#dadada"></div>
<svg style="left:1088.5px;top:169.8px" width="14" height="15.6" viewBox="0 0 14 15.6"><rect x="1" y="2.6" width="12" height="12.4" rx="1" fill="#fdfdfd" stroke="#5a4a4a" stroke-width="1"/><rect x="0.3" y="2.4" width="3" height="12.8" rx="0.8" fill="#b83838"/><rect x="0.3" y="2.4" width="1.2" height="12.8" fill="#8a2424"/><path d="M4 0.4V3.4M7 0.4V3.4M10 0.4V3.4" stroke="#4a3a3a" stroke-width="1.1"/><path d="M3.3 4.4H12.5" stroke="#c8c8c8" stroke-width="0.8"/><rect x="5.2" y="6.6" width="5.6" height="7" fill="#f2f2f2" stroke="#8a8a8a" stroke-width="0.6"/><text x="8" y="12.6" font-family="Liberation Sans, sans-serif" font-size="6.6" font-weight="bold" text-anchor="middle" fill="#223">5</text></svg>
<span class="t" style="left:1108px;top:170px;font-weight:bold;font-size:12px;letter-spacing:-0.1px;max-width:99.5px;overflow:hidden;">Canned Vegetables</span>
<span class="t" style="left:1208px;width:31px;top:170px;text-align:right;font-weight:bold;font-size:12px;">7</span>
<span class="t" style="left:1243px;width:32px;top:170px;text-align:right;font-weight:bold;font-size:12px;">7</span>
<div style="left:1075px;top:195.5px;width:10px;height:1px;background:#dadada"></div>
<svg style="left:1088.5px;top:187.8px" width="14" height="15.6" viewBox="0 0 14 15.6"><rect x="1" y="2.6" width="12" height="12.4" rx="1" fill="#fdfdfd" stroke="#5a4a4a" stroke-width="1"/><rect x="0.3" y="2.4" width="3" height="12.8" rx="0.8" fill="#b83838"/><rect x="0.3" y="2.4" width="1.2" height="12.8" fill="#8a2424"/><path d="M4 0.4V3.4M7 0.4V3.4M10 0.4V3.4" stroke="#4a3a3a" stroke-width="1.1"/><path d="M3.3 4.4H12.5" stroke="#c8c8c8" stroke-width="0.8"/><rect x="5.2" y="6.6" width="5.6" height="7" fill="#f2f2f2" stroke="#8a8a8a" stroke-width="0.6"/><text x="8" y="12.6" font-family="Liberation Sans, sans-serif" font-size="6.6" font-weight="bold" text-anchor="middle" fill="#223">5</text></svg>
<span class="t" style="left:1108px;top:188px;font-weight:bold;font-size:12px;letter-spacing:-0.1px;max-width:99.5px;overflow:hidden;">Fruits</span>
<span class="t" style="left:1208px;width:31px;top:188px;text-align:right;font-weight:bold;font-size:12px;">14</span>
<span class="t" style="left:1243px;width:32px;top:188px;text-align:right;font-weight:bold;font-size:12px;">14</span>
<div style="left:1075px;top:213.5px;width:10px;height:1px;background:#dadada"></div>
<svg style="left:1088.5px;top:205.8px" width="14" height="15.6" viewBox="0 0 14 15.6"><rect x="1" y="2.6" width="12" height="12.4" rx="1" fill="#fdfdfd" stroke="#5a4a4a" stroke-width="1"/><rect x="0.3" y="2.4" width="3" height="12.8" rx="0.8" fill="#b83838"/><rect x="0.3" y="2.4" width="1.2" height="12.8" fill="#8a2424"/><path d="M4 0.4V3.4M7 0.4V3.4M10 0.4V3.4" stroke="#4a3a3a" stroke-width="1.1"/><path d="M3.3 4.4H12.5" stroke="#c8c8c8" stroke-width="0.8"/><rect x="5.2" y="6.6" width="5.6" height="7" fill="#f2f2f2" stroke="#8a8a8a" stroke-width="0.6"/><text x="8" y="12.6" font-family="Liberation Sans, sans-serif" font-size="6.6" font-weight="bold" text-anchor="middle" fill="#223">5</text></svg>
<span class="t" style="left:1108px;top:206px;font-weight:bold;font-size:12px;letter-spacing:-0.1px;max-width:99.5px;overflow:hidden;">Canned Fruits</span>
<span class="t" style="left:1208px;width:31px;top:206px;text-align:right;font-weight:bold;font-size:12px;">5</span>
<span class="t" style="left:1243px;width:32px;top:206px;text-align:right;font-weight:bold;font-size:12px;">5</span>
<div style="left:1075px;top:231.5px;width:10px;height:1px;background:#dadada"></div>
<svg style="left:1088.5px;top:223.8px" width="14" height="15.6" viewBox="0 0 14 15.6"><rect x="1" y="2.6" width="12" height="12.4" rx="1" fill="#fdfdfd" stroke="#5a4a4a" stroke-width="1"/><rect x="0.3" y="2.4" width="3" height="12.8" rx="0.8" fill="#b83838"/><rect x="0.3" y="2.4" width="1.2" height="12.8" fill="#8a2424"/><path d="M4 0.4V3.4M7 0.4V3.4M10 0.4V3.4" stroke="#4a3a3a" stroke-width="1.1"/><path d="M3.3 4.4H12.5" stroke="#c8c8c8" stroke-width="0.8"/><rect x="5.2" y="6.6" width="5.6" height="7" fill="#f2f2f2" stroke="#8a8a8a" stroke-width="0.6"/><text x="8" y="12.6" font-family="Liberation Sans, sans-serif" font-size="6.6" font-weight="bold" text-anchor="middle" fill="#223">5</text></svg>
<span class="t" style="left:1108px;top:224px;font-weight:bold;font-size:12px;letter-spacing:-0.1px;max-width:99.5px;overflow:hidden;">Frozen</span>
<span class="t" style="left:1208px;width:31px;top:224px;text-align:right;font-weight:bold;font-size:12px;">8</span>
<span class="t" style="left:1243px;width:32px;top:224px;text-align:right;font-weight:bold;font-size:12px;">8</span>
<div style="left:1075px;top:249.5px;width:10px;height:1px;background:#dadada"></div>
<svg style="left:1088.5px;top:241.8px" width="14" height="15.6" viewBox="0 0 14 15.6"><rect x="1" y="2.6" width="12" height="12.4" rx="1" fill="#fdfdfd" stroke="#5a4a4a" stroke-width="1"/><rect x="0.3" y="2.4" width="3" height="12.8" rx="0.8" fill="#b83838"/><rect x="0.3" y="2.4" width="1.2" height="12.8" fill="#8a2424"/><path d="M4 0.4V3.4M7 0.4V3.4M10 0.4V3.4" stroke="#4a3a3a" stroke-width="1.1"/><path d="M3.3 4.4H12.5" stroke="#c8c8c8" stroke-width="0.8"/><rect x="5.2" y="6.6" width="5.6" height="7" fill="#f2f2f2" stroke="#8a8a8a" stroke-width="0.6"/><text x="8" y="12.6" font-family="Liberation Sans, sans-serif" font-size="6.6" font-weight="bold" text-anchor="middle" fill="#223">5</text></svg>
<span class="t" style="left:1108px;top:242px;font-weight:bold;font-size:12px;letter-spacing:-0.1px;max-width:99.5px;overflow:hidden;">Beans</span>
<span class="t" style="left:1208px;width:31px;top:242px;text-align:right;font-weight:bold;font-size:12px;">6</span>
<span class="t" style="left:1243px;width:32px;top:242px;text-align:right;font-weight:bold;font-size:12px;">6</span>
<div style="left:1075px;top:267.5px;width:10px;height:1px;background:#dadada"></div>
<svg style="left:1088.5px;top:259.8px" width="14" height="15.6" viewBox="0 0 14 15.6"><rect x="1" y="2.6" width="12" height="12.4" rx="1" fill="#fdfdfd" stroke="#5a4a4a" stroke-width="1"/><rect x="0.3" y="2.4" width="3" height="12.8" rx="0.8" fill="#b83838"/><rect x="0.3" y="2.4" width="1.2" height="12.8" fill="#8a2424"/><path d="M4 0.4V3.4M7 0.4V3.4M10 0.4V3.4" stroke="#4a3a3a" stroke-width="1.1"/><path d="M3.3 4.4H12.5" stroke="#c8c8c8" stroke-width="0.8"/><rect x="5.2" y="6.6" width="5.6" height="7" fill="#f2f2f2" stroke="#8a8a8a" stroke-width="0.6"/><text x="8" y="12.6" font-family="Liberation Sans, sans-serif" font-size="6.6" font-weight="bold" text-anchor="middle" fill="#223">5</text></svg>
<span class="t" style="left:1108px;top:260px;font-weight:bold;font-size:12px;letter-spacing:-0.1px;max-width:99.5px;overflow:hidden;">Meat</span>
<span class="t" style="left:1208px;width:31px;top:260px;text-align:right;font-weight:bold;font-size:12px;">6</span>
<span class="t" style="left:1243px;width:32px;top:260px;text-align:right;font-weight:bold;font-size:12px;">6</span>
<div style="left:1075px;top:285.5px;width:10px;height:1px;background:#dadada"></div>
<svg style="left:1088.5px;top:277.8px" width="14" height="15.6" viewBox="0 0 14 15.6"><rect x="1" y="2.6" width="12" height="12.4" rx="1" fill="#fdfdfd" stroke="#5a4a4a" stroke-width="1"/><rect x="0.3" y="2.4" width="3" height="12.8" rx="0.8" fill="#b83838"/><rect x="0.3" y="2.4" width="1.2" height="12.8" fill="#8a2424"/><path d="M4 0.4V3.4M7 0.4V3.4M10 0.4V3.4" stroke="#4a3a3a" stroke-width="1.1"/><path d="M3.3 4.4H12.5" stroke="#c8c8c8" stroke-width="0.8"/><rect x="5.2" y="6.6" width="5.6" height="7" fill="#f2f2f2" stroke="#8a8a8a" stroke-width="0.6"/><text x="8" y="12.6" font-family="Liberation Sans, sans-serif" font-size="6.6" font-weight="bold" text-anchor="middle" fill="#223">5</text></svg>
<span class="t" style="left:1108px;top:278px;font-weight:bold;font-size:12px;letter-spacing:-0.1px;max-width:99.5px;overflow:hidden;">Seasonings</span>
<span class="t" style="left:1208px;width:31px;top:278px;text-align:right;font-weight:bold;font-size:12px;">10</span>
<span class="t" style="left:1243px;width:32px;top:278px;text-align:right;font-weight:bold;font-size:12px;">10</span>
<div style="left:1075px;top:303.5px;width:10px;height:1px;background:#dadada"></div>
<svg style="left:1088.5px;top:295.8px" width="14" height="15.6" viewBox="0 0 14 15.6"><rect x="1" y="2.6" width="12" height="12.4" rx="1" fill="#fdfdfd" stroke="#5a4a4a" stroke-width="1"/><rect x="0.3" y="2.4" width="3" height="12.8" rx="0.8" fill="#b83838"/><rect x="0.3" y="2.4" width="1.2" height="12.8" fill="#8a2424"/><path d="M4 0.4V3.4M7 0.4V3.4M10 0.4V3.4" stroke="#4a3a3a" stroke-width="1.1"/><path d="M3.3 4.4H12.5" stroke="#c8c8c8" stroke-width="0.8"/><rect x="5.2" y="6.6" width="5.6" height="7" fill="#f2f2f2" stroke="#8a8a8a" stroke-width="0.6"/><text x="8" y="12.6" font-family="Liberation Sans, sans-serif" font-size="6.6" font-weight="bold" text-anchor="middle" fill="#223">5</text></svg>
<span class="t" style="left:1108px;top:296px;font-weight:bold;font-size:12px;letter-spacing:-0.1px;max-width:99.5px;overflow:hidden;">Condiments</span>
<span class="t" style="left:1208px;width:31px;top:296px;text-align:right;font-weight:bold;font-size:12px;">9</span>
<span class="t" style="left:1243px;width:32px;top:296px;text-align:right;font-weight:bold;font-size:12px;">9</span>
<div style="left:1075px;top:321.5px;width:10px;height:1px;background:#dadada"></div>
<svg style="left:1088.5px;top:313.8px" width="14" height="15.6" viewBox="0 0 14 15.6"><rect x="1" y="2.6" width="12" height="12.4" rx="1" fill="#fdfdfd" stroke="#5a4a4a" stroke-width="1"/><rect x="0.3" y="2.4" width="3" height="12.8" rx="0.8" fill="#b83838"/><rect x="0.3" y="2.4" width="1.2" height="12.8" fill="#8a2424"/><path d="M4 0.4V3.4M7 0.4V3.4M10 0.4V3.4" stroke="#4a3a3a" stroke-width="1.1"/><path d="M3.3 4.4H12.5" stroke="#c8c8c8" stroke-width="0.8"/><rect x="5.2" y="6.6" width="5.6" height="7" fill="#f2f2f2" stroke="#8a8a8a" stroke-width="0.6"/><text x="8" y="12.6" font-family="Liberation Sans, sans-serif" font-size="6.6" font-weight="bold" text-anchor="middle" fill="#223">5</text></svg>
<span class="t" style="left:1108px;top:314px;font-weight:bold;font-size:12px;letter-spacing:-0.1px;max-width:99.5px;overflow:hidden;">Oils</span>
<span class="t" style="left:1208px;width:31px;top:314px;text-align:right;font-weight:bold;font-size:12px;">3</span>
<span class="t" style="left:1243px;width:32px;top:314px;text-align:right;font-weight:bold;font-size:12px;">3</span>
<div style="left:1075px;top:339.5px;width:10px;height:1px;background:#dadada"></div>
<svg style="left:1088.5px;top:331.8px" width="14" height="15.6" viewBox="0 0 14 15.6"><rect x="1" y="2.6" width="12" height="12.4" rx="1" fill="#fdfdfd" stroke="#5a4a4a" stroke-width="1"/><rect x="0.3" y="2.4" width="3" height="12.8" rx="0.8" fill="#b83838"/><rect x="0.3" y="2.4" width="1.2" height="12.8" fill="#8a2424"/><path d="M4 0.4V3.4M7 0.4V3.4M10 0.4V3.4" stroke="#4a3a3a" stroke-width="1.1"/><path d="M3.3 4.4H12.5" stroke="#c8c8c8" stroke-width="0.8"/><rect x="5.2" y="6.6" width="5.6" height="7" fill="#f2f2f2" stroke="#8a8a8a" stroke-width="0.6"/><text x="8" y="12.6" font-family="Liberation Sans, sans-serif" font-size="6.6" font-weight="bold" text-anchor="middle" fill="#223">5</text></svg>
<span class="t" style="left:1108px;top:332px;font-weight:bold;font-size:12px;letter-spacing:-0.1px;max-width:99.5px;overflow:hidden;">Snacks</span>
<span class="t" style="left:1208px;width:31px;top:332px;text-align:right;font-weight:bold;font-size:12px;">8</span>
<span class="t" style="left:1243px;width:32px;top:332px;text-align:right;font-weight:bold;font-size:12px;">8</span>
<div style="left:1075px;top:357.5px;width:10px;height:1px;background:#dadada"></div>
<svg style="left:1088.5px;top:349.8px" width="14" height="15.6" viewBox="0 0 14 15.6"><rect x="1" y="2.6" width="12" height="12.4" rx="1" fill="#fdfdfd" stroke="#5a4a4a" stroke-width="1"/><rect x="0.3" y="2.4" width="3" height="12.8" rx="0.8" fill="#b83838"/><rect x="0.3" y="2.4" width="1.2" height="12.8" fill="#8a2424"/><path d="M4 0.4V3.4M7 0.4V3.4M10 0.4V3.4" stroke="#4a3a3a" stroke-width="1.1"/><path d="M3.3 4.4H12.5" stroke="#c8c8c8" stroke-width="0.8"/><rect x="5.2" y="6.6" width="5.6" height="7" fill="#f2f2f2" stroke="#8a8a8a" stroke-width="0.6"/><text x="8" y="12.6" font-family="Liberation Sans, sans-serif" font-size="6.6" font-weight="bold" text-anchor="middle" fill="#223">5</text></svg>
<span class="t" style="left:1108px;top:350px;font-weight:bold;font-size:12px;letter-spacing:-0.1px;max-width:99.5px;overflow:hidden;">Soups</span>
<span class="t" style="left:1208px;width:31px;top:350px;text-align:right;font-weight:bold;font-size:12px;">10</span>
<span class="t" style="left:1243px;width:32px;top:350px;text-align:right;font-weight:bold;font-size:12px;">10</span>
<div style="left:1075px;top:375.5px;width:10px;height:1px;background:#dadada"></div>
<svg style="left:1088.5px;top:367.8px" width="14" height="15.6" viewBox="0 0 14 15.6"><rect x="1" y="2.6" width="12" height="12.4" rx="1" fill="#fdfdfd" stroke="#5a4a4a" stroke-width="1"/><rect x="0.3" y="2.4" width="3" height="12.8" rx="0.8" fill="#b83838"/><rect x="0.3" y="2.4" width="1.2" height="12.8" fill="#8a2424"/><path d="M4 0.4V3.4M7 0.4V3.4M10 0.4V3.4" stroke="#4a3a3a" stroke-width="1.1"/><path d="M3.3 4.4H12.5" stroke="#c8c8c8" stroke-width="0.8"/><rect x="5.2" y="6.6" width="5.6" height="7" fill="#f2f2f2" stroke="#8a8a8a" stroke-width="0.6"/><text x="8" y="12.6" font-family="Liberation Sans, sans-serif" font-size="6.6" font-weight="bold" text-anchor="middle" fill="#223">5</text></svg>
<span class="t" style="left:1108px;top:368px;font-weight:bold;font-size:12px;letter-spacing:-0.1px;max-width:99.5px;overflow:hidden;">Breads</span>
<span class="t" style="left:1208px;width:31px;top:368px;text-align:right;font-weight:bold;font-size:12px;">8</span>
<span class="t" style="left:1243px;width:32px;top:368px;text-align:right;font-weight:bold;font-size:12px;">8</span>
<div style="left:1075px;top:393.5px;width:10px;height:1px;background:#dadada"></div>
<svg style="left:1088.5px;top:385.8px" width="14" height="15.6" viewBox="0 0 14 15.6"><rect x="1" y="2.6" width="12" height="12.4" rx="1" fill="#fdfdfd" stroke="#5a4a4a" stroke-width="1"/><rect x="0.3" y="2.4" width="3" height="12.8" rx="0.8" fill="#b83838"/><rect x="0.3" y="2.4" width="1.2" height="12.8" fill="#8a2424"/><path d="M4 0.4V3.4M7 0.4V3.4M10 0.4V3.4" stroke="#4a3a3a" stroke-width="1.1"/><path d="M3.3 4.4H12.5" stroke="#c8c8c8" stroke-width="0.8"/><rect x="5.2" y="6.6" width="5.6" height="7" fill="#f2f2f2" stroke="#8a8a8a" stroke-width="0.6"/><text x="8" y="12.6" font-family="Liberation Sans, sans-serif" font-size="6.6" font-weight="bold" text-anchor="middle" fill="#223">5</text></svg>
<span class="t" style="left:1108px;top:386px;font-weight:bold;font-size:12px;letter-spacing:-0.1px;max-width:99.5px;overflow:hidden;">Beverages</span>
<span class="t" style="left:1208px;width:31px;top:386px;text-align:right;font-weight:bold;font-size:12px;">5</span>
<span class="t" style="left:1243px;width:32px;top:386px;text-align:right;font-weight:bold;font-size:12px;">5</span>
<div style="left:1075px;top:411.5px;width:10px;height:1px;background:#dadada"></div>
<svg style="left:1088.5px;top:403.8px" width="14" height="15.6" viewBox="0 0 14 15.6"><rect x="1" y="2.6" width="12" height="12.4" rx="1" fill="#fdfdfd" stroke="#5a4a4a" stroke-width="1"/><rect x="0.3" y="2.4" width="3" height="12.8" rx="0.8" fill="#b83838"/><rect x="0.3" y="2.4" width="1.2" height="12.8" fill="#8a2424"/><path d="M4 0.4V3.4M7 0.4V3.4M10 0.4V3.4" stroke="#4a3a3a" stroke-width="1.1"/><path d="M3.3 4.4H12.5" stroke="#c8c8c8" stroke-width="0.8"/><rect x="5.2" y="6.6" width="5.6" height="7" fill="#f2f2f2" stroke="#8a8a8a" stroke-width="0.6"/><text x="8" y="12.6" font-family="Liberation Sans, sans-serif" font-size="6.6" font-weight="bold" text-anchor="middle" fill="#223">5</text></svg>
<span class="t" style="left:1108px;top:404px;font-weight:bold;font-size:12px;letter-spacing:-0.1px;max-width:99.5px;overflow:hidden;">Dairy</span>
<span class="t" style="left:1208px;width:31px;top:404px;text-align:right;font-weight:bold;font-size:12px;">6</span>
<span class="t" style="left:1243px;width:32px;top:404px;text-align:right;font-weight:bold;font-size:12px;">6</span>
<div style="left:1075px;top:429.5px;width:10px;height:1px;background:#dadada"></div>
<svg style="left:1088.5px;top:421.8px" width="14" height="15.6" viewBox="0 0 14 15.6"><rect x="1" y="2.6" width="12" height="12.4" rx="1" fill="#fdfdfd" stroke="#5a4a4a" stroke-width="1"/><rect x="0.3" y="2.4" width="3" height="12.8" rx="0.8" fill="#b83838"/><rect x="0.3" y="2.4" width="1.2" height="12.8" fill="#8a2424"/><path d="M4 0.4V3.4M7 0.4V3.4M10 0.4V3.4" stroke="#4a3a3a" stroke-width="1.1"/><path d="M3.3 4.4H12.5" stroke="#c8c8c8" stroke-width="0.8"/><rect x="5.2" y="6.6" width="5.6" height="7" fill="#f2f2f2" stroke="#8a8a8a" stroke-width="0.6"/><text x="8" y="12.6" font-family="Liberation Sans, sans-serif" font-size="6.6" font-weight="bold" text-anchor="middle" fill="#223">5</text></svg>
<span class="t" style="left:1108px;top:422px;font-weight:bold;font-size:12px;letter-spacing:-0.1px;max-width:99.5px;overflow:hidden;">Packaged</span>
<span class="t" style="left:1208px;width:31px;top:422px;text-align:right;font-weight:bold;font-size:12px;">12</span>
<span class="t" style="left:1243px;width:32px;top:422px;text-align:right;font-weight:bold;font-size:12px;">12</span>
<div style="left:1075px;top:447.5px;width:10px;height:1px;background:#dadada"></div>
<svg style="left:1088.5px;top:439.8px" width="14" height="15.6" viewBox="0 0 14 15.6"><rect x="1" y="2.6" width="12" height="12.4" rx="1" fill="#fdfdfd" stroke="#5a4a4a" stroke-width="1"/><rect x="0.3" y="2.4" width="3" height="12.8" rx="0.8" fill="#b83838"/><rect x="0.3" y="2.4" width="1.2" height="12.8" fill="#8a2424"/><path d="M4 0.4V3.4M7 0.4V3.4M10 0.4V3.4" stroke="#4a3a3a" stroke-width="1.1"/><path d="M3.3 4.4H12.5" stroke="#c8c8c8" stroke-width="0.8"/><rect x="5.2" y="6.6" width="5.6" height="7" fill="#f2f2f2" stroke="#8a8a8a" stroke-width="0.6"/><text x="8" y="12.6" font-family="Liberation Sans, sans-serif" font-size="6.6" font-weight="bold" text-anchor="middle" fill="#223">5</text></svg>
<span class="t" style="left:1108px;top:440px;font-weight:bold;font-size:12px;letter-spacing:-0.1px;max-width:99.5px;overflow:hidden;">Baby Food</span>
<span class="t" style="left:1208px;width:31px;top:440px;text-align:right;font-weight:bold;font-size:12px;">11</span>
<span class="t" style="left:1243px;width:32px;top:440px;text-align:right;font-weight:bold;font-size:12px;">11</span>
<div style="left:1075px;top:465.5px;width:10px;height:1px;background:#dadada"></div>
<svg style="left:1088.5px;top:457.8px" width="14" height="15.6" viewBox="0 0 14 15.6"><rect x="1" y="2.6" width="12" height="12.4" rx="1" fill="#fdfdfd" stroke="#5a4a4a" stroke-width="1"/><rect x="0.3" y="2.4" width="3" height="12.8" rx="0.8" fill="#b83838"/><rect x="0.3" y="2.4" width="1.2" height="12.8" fill="#8a2424"/><path d="M4 0.4V3.4M7 0.4V3.4M10 0.4V3.4" stroke="#4a3a3a" stroke-width="1.1"/><path d="M3.3 4.4H12.5" stroke="#c8c8c8" stroke-width="0.8"/><rect x="5.2" y="6.6" width="5.6" height="7" fill="#f2f2f2" stroke="#8a8a8a" stroke-width="0.6"/><text x="8" y="12.6" font-family="Liberation Sans, sans-serif" font-size="6.6" font-weight="bold" text-anchor="middle" fill="#223">5</text></svg>
<span class="t" style="left:1108px;top:458px;font-weight:bold;font-size:12px;letter-spacing:-0.1px;max-width:99.5px;overflow:hidden;">Medicine</span>
<span class="t" style="left:1208px;width:31px;top:458px;text-align:right;font-weight:bold;font-size:12px;">6</span>
<span class="t" style="left:1243px;width:32px;top:458px;text-align:right;font-weight:bold;font-size:12px;">6</span>
<div style="left:1075px;top:483.5px;width:10px;height:1px;background:#dadada"></div>
<svg style="left:1088.5px;top:475.8px" width="14" height="15.6" viewBox="0 0 14 15.6"><rect x="1" y="2.6" width="12" height="12.4" rx="1" fill="#fdfdfd" stroke="#5a4a4a" stroke-width="1"/><rect x="0.3" y="2.4" width="3" height="12.8" rx="0.8" fill="#b83838"/><rect x="0.3" y="2.4" width="1.2" height="12.8" fill="#8a2424"/><path d="M4 0.4V3.4M7 0.4V3.4M10 0.4V3.4" stroke="#4a3a3a" stroke-width="1.1"/><path d="M3.3 4.4H12.5" stroke="#c8c8c8" stroke-width="0.8"/><rect x="5.2" y="6.6" width="5.6" height="7" fill="#f2f2f2" stroke="#8a8a8a" stroke-width="0.6"/><text x="8" y="12.6" font-family="Liberation Sans, sans-serif" font-size="6.6" font-weight="bold" text-anchor="middle" fill="#223">5</text></svg>
<span class="t" style="left:1108px;top:476px;font-weight:bold;font-size:12px;letter-spacing:-0.1px;max-width:99.5px;overflow:hidden;">Baby Items</span>
<span class="t" style="left:1208px;width:31px;top:476px;text-align:right;font-weight:bold;font-size:12px;">7</span>
<span class="t" style="left:1243px;width:32px;top:476px;text-align:right;font-weight:bold;font-size:12px;">7</span>
<div style="left:1075px;top:501.5px;width:10px;height:1px;background:#dadada"></div>
<svg style="left:1088.5px;top:493.8px" width="14" height="15.6" viewBox="0 0 14 15.6"><rect x="1" y="2.6" width="12" height="12.4" rx="1" fill="#fdfdfd" stroke="#5a4a4a" stroke-width="1"/><rect x="0.3" y="2.4" width="3" height="12.8" rx="0.8" fill="#b83838"/><rect x="0.3" y="2.4" width="1.2" height="12.8" fill="#8a2424"/><path d="M4 0.4V3.4M7 0.4V3.4M10 0.4V3.4" stroke="#4a3a3a" stroke-width="1.1"/><path d="M3.3 4.4H12.5" stroke="#c8c8c8" stroke-width="0.8"/><rect x="5.2" y="6.6" width="5.6" height="7" fill="#f2f2f2" stroke="#8a8a8a" stroke-width="0.6"/><text x="8" y="12.6" font-family="Liberation Sans, sans-serif" font-size="6.6" font-weight="bold" text-anchor="middle" fill="#223">5</text></svg>
<span class="t" style="left:1108px;top:494px;font-weight:bold;font-size:12px;letter-spacing:-0.1px;max-width:99.5px;overflow:hidden;">Pet Items</span>
<span class="t" style="left:1208px;width:31px;top:494px;text-align:right;font-weight:bold;font-size:12px;">2</span>
<span class="t" style="left:1243px;width:32px;top:494px;text-align:right;font-weight:bold;font-size:12px;">2</span>
<div style="left:1075px;top:519.5px;width:10px;height:1px;background:#dadada"></div>
<svg style="left:1088.5px;top:511.8px" width="14" height="15.6" viewBox="0 0 14 15.6"><rect x="1" y="2.6" width="12" height="12.4" rx="1" fill="#fdfdfd" stroke="#5a4a4a" stroke-width="1"/><rect x="0.3" y="2.4" width="3" height="12.8" rx="0.8" fill="#b83838"/><rect x="0.3" y="2.4" width="1.2" height="12.8" fill="#8a2424"/><path d="M4 0.4V3.4M7 0.4V3.4M10 0.4V3.4" stroke="#4a3a3a" stroke-width="1.1"/><path d="M3.3 4.4H12.5" stroke="#c8c8c8" stroke-width="0.8"/><rect x="5.2" y="6.6" width="5.6" height="7" fill="#f2f2f2" stroke="#8a8a8a" stroke-width="0.6"/><text x="8" y="12.6" font-family="Liberation Sans, sans-serif" font-size="6.6" font-weight="bold" text-anchor="middle" fill="#223">5</text></svg>
<span class="t" style="left:1108px;top:512px;font-weight:bold;font-size:12px;letter-spacing:-0.1px;max-width:99.5px;overflow:hidden;">Toiletries</span>
<span class="t" style="left:1208px;width:31px;top:512px;text-align:right;font-weight:bold;font-size:12px;">9</span>
<span class="t" style="left:1243px;width:32px;top:512px;text-align:right;font-weight:bold;font-size:12px;">9</span>
<div style="left:1075px;top:537.5px;width:10px;height:1px;background:#dadada"></div>
<svg style="left:1088.5px;top:529.8px" width="14" height="15.6" viewBox="0 0 14 15.6"><rect x="1" y="2.6" width="12" height="12.4" rx="1" fill="#fdfdfd" stroke="#5a4a4a" stroke-width="1"/><rect x="0.3" y="2.4" width="3" height="12.8" rx="0.8" fill="#b83838"/><rect x="0.3" y="2.4" width="1.2" height="12.8" fill="#8a2424"/><path d="M4 0.4V3.4M7 0.4V3.4M10 0.4V3.4" stroke="#4a3a3a" stroke-width="1.1"/><path d="M3.3 4.4H12.5" stroke="#c8c8c8" stroke-width="0.8"/><rect x="5.2" y="6.6" width="5.6" height="7" fill="#f2f2f2" stroke="#8a8a8a" stroke-width="0.6"/><text x="8" y="12.6" font-family="Liberation Sans, sans-serif" font-size="6.6" font-weight="bold" text-anchor="middle" fill="#223">5</text></svg>
<span class="t" style="left:1108px;top:530px;font-weight:bold;font-size:12px;letter-spacing:-0.1px;max-width:99.5px;overflow:hidden;">Cleaners</span>
<span class="t" style="left:1208px;width:31px;top:530px;text-align:right;font-weight:bold;font-size:12px;">13</span>
<span class="t" style="left:1243px;width:32px;top:530px;text-align:right;font-weight:bold;font-size:12px;">13</span>
<div style="left:1085.5px;top:546.5px;width:191px;height:18px;border:1px solid #222;background:#fff"></div>
<div style="left:1208px;top:547.5px;width:67.5px;height:16px;background:#e6e3d0"></div>
<div style="left:1075px;top:555.5px;width:10px;height:1px;background:#dadada"></div>
<svg style="left:1088.5px;top:547.8px" width="14" height="15.6" viewBox="0 0 14 15.6"><rect x="1" y="2.6" width="12" height="12.4" rx="1" fill="#fdfdfd" stroke="#5a4a4a" stroke-width="1"/><rect x="0.3" y="2.4" width="3" height="12.8" rx="0.8" fill="#b83838"/><rect x="0.3" y="2.4" width="1.2" height="12.8" fill="#8a2424"/><path d="M4 0.4V3.4M7 0.4V3.4M10 0.4V3.4" stroke="#4a3a3a" stroke-width="1.1"/><path d="M3.3 4.4H12.5" stroke="#c8c8c8" stroke-width="0.8"/><rect x="5.2" y="6.6" width="5.6" height="7" fill="#f2f2f2" stroke="#8a8a8a" stroke-width="0.6"/><text x="8" y="12.6" font-family="Liberation Sans, sans-serif" font-size="6.6" font-weight="bold" text-anchor="middle" fill="#223">5</text></svg>
<span class="t" style="left:1108px;top:548px;font-weight:bold;font-size:12px;letter-spacing:-0.1px;max-width:99.5px;overflow:hidden;">Paper</span>
<span class="t" style="left:1208px;width:31px;top:548px;text-align:right;font-weight:bold;font-size:12px;">9</span>
<span class="t" style="left:1243px;width:32px;top:548px;text-align:right;font-weight:bold;font-size:12px;">9</span>
<div style="left:1075px;top:151px;width:1px;height:405px;background:#dadada"></div>
<div style="left:1065px;top:632px;width:213px;height:21px;background:linear-gradient(#fefefb,#f1efe3);border:1px solid #d0cdbd;border-radius:4px 4px 0 0"></div>
<span class="t" style="left:1069px;top:635px;">Filters Bar</span>
<div style="left:1229.5px;top:637px;width:11.5px;height:11px;background:#2d62dc;border-radius:2px"><div style="left:2.2px;top:2.2px;width:7px;height:6.6px;border:1.6px solid #fff;border-radius:1px"></div></div>
<svg style="left:1245.5px;top:636px" width="11" height="13" viewBox="0 0 11 13"><path d="M2 1H9M3.2 1V6M7.8 1V6M0.5 6.5H10.5M5.5 7V12.5" stroke="#1c48b8" stroke-width="1.6" fill="none"/></svg>
<div style="left:1261.5px;top:637px;width:11.5px;height:11px;background:#de4b22;border-radius:2px"><svg style="left:2px;top:1.8px" width="7.5" height="7.5"><path d="M0.8 0.8L6.7 6.7M6.7 0.8L0.8 6.7" stroke="#fff" stroke-width="1.9"/></svg></div>
<div style="left:1065px;top:653px;width:213px;height:31px;background:linear-gradient(#f6f5ec,#ebe8d9)"></div>
<div class="grip" style="left:1069px;top:660px;height:19px"></div>
<div style="left:1075px;top:660px;width:93px;height:19.5px;background:#f1f0e8;border:1px solid #a3b6d6"></div>
<span class="t" style="left:1078.5px;top:663px;color:#b0ad9e">Custom</span>
<svg style="left:1153px;top:666px" width="10" height="7" viewBox="0 0 10 7"><path d="M1 1L5 5.5L9 1" fill="none" stroke="#c2c0b4" stroke-width="1.7"/></svg>
<svg style="left:1172px;top:660.5px" width="18" height="18" viewBox="0 0 18 18"><path d="M8 0.5H14L16.5 3V11H8Z" fill="#e8f0fb" stroke="#9fb4d8" stroke-width="0.8"/><path d="M1.5 8V14.5H6" fill="none" stroke="#7f98d0" stroke-width="1.8"/><path d="M5 14L8 9.5L6.5 8.5L12.5 4L11.5 11.5L10 10.5L7 15Z" fill="#38b838" stroke="#1c7a1c" stroke-width="0.6"/></svg>
<svg style="left:1191px;top:667px" width="5.5" height="3.5" viewBox="0 0 5.5 3.5"><path d="M0 0H5.5L2.75 3.5Z" fill="#000"/></svg>
<svg style="left:1204.5px;top:663px" width="17" height="14" viewBox="0 0 17 14"><path d="M2 9.5L9.5 1.2C10.3 0.4 11.2 0.4 12 1L14.8 3.2C15.6 4 15.6 4.8 15 5.6L8 12.5H4.5Z" fill="#f8f8f8" stroke="#a4a4a4" stroke-width="1.2"/><path d="M4.5 12.8H14" stroke="#a4a4a4" stroke-width="1.2"/></svg>
<svg style="left:1230px;top:663.5px" width="14" height="13" viewBox="0 0 14 13"><path d="M1.5 1.5L12.5 11.5M12.5 1.5L1.5 11.5" stroke="#b4b4b4" stroke-width="3.2" stroke-linecap="round"/></svg>
<svg style="left:1251.5px;top:674.25px" width="5.5" height="3.5" viewBox="0 0 5.5 3.5"><path d="M0 0H5.5L2.75 3.5Z" fill="#000"/></svg>
<div style="left:1065px;top:683.5px;width:213px;height:288.5px;background:#ece9d8;border:1px solid #8f9db8;border-top:1.6px solid #7f8ca4;box-shadow:1px 1px 0 #c2c8d6"></div>
<div style="left:1067px;top:705px;width:210px;height:1px;border-top:1px dotted #c4c1b0"></div>
<span class="t" style="left:1082px;top:688.2px;max-width:82.5px;overflow:hidden">Completion</span>
<div style="left:1259px;top:687.8px;width:15px;height:15px;background:#c4d3f8;border-radius:1.5px"><svg style="left:3px;top:5px" width="9" height="6"><path d="M1 0.8L4.5 4.3L8 0.8" fill="none" stroke="#27408b" stroke-width="1.9"/></svg></div>
<div style="left:1067px;top:726px;width:210px;height:1px;border-top:1px dotted #c4c1b0"></div>
<span class="t" style="left:1082px;top:709.2px;max-width:82.5px;overflow:hidden">Due Date</span>
<div style="left:1259px;top:708.8px;width:15px;height:15px;background:#c4d3f8;border-radius:1.5px"><svg style="left:3px;top:5px" width="9" height="6"><path d="M1 0.8L4.5 4.3L8 0.8" fill="none" stroke="#27408b" stroke-width="1.9"/></svg></div>
<div style="left:1067px;top:747px;width:210px;height:1px;border-top:1px dotted #c4c1b0"></div>
<span class="t" style="left:1082px;top:730.2px;max-width:82.5px;overflow:hidden">Status</span>
<div style="left:1259px;top:729.8px;width:15px;height:15px;background:#c4d3f8;border-radius:1.5px"><svg style="left:3px;top:5px" width="9" height="6"><path d="M1 0.8L4.5 4.3L8 0.8" fill="none" stroke="#27408b" stroke-width="1.9"/></svg></div>
<div style="left:1067px;top:768px;width:210px;height:1px;border-top:1px dotted #c4c1b0"></div>
<span class="t" style="left:1082px;top:751.2px;max-width:82.5px;overflow:hidden">Priority</span>
<div style="left:1259px;top:750.8px;width:15px;height:15px;background:#c4d3f8;border-radius:1.5px"><svg style="left:3px;top:5px" width="9" height="6"><path d="M1 0.8L4.5 4.3L8 0.8" fill="none" stroke="#27408b" stroke-width="1.9"/></svg></div>
<div style="left:1067px;top:789px;width:210px;height:1px;border-top:1px dotted #c4c1b0"></div>
<span class="t" style="left:1082px;top:772.2px;max-width:82.5px;overflow:hidden">Task Name</span>
<div style="left:1067px;top:810px;width:210px;height:1px;border-top:1px dotted #c4c1b0"></div>
<span class="t" style="left:1082px;top:793.2px;max-width:82.5px;overflow:hidden">Date Created</span>
<div style="left:1259px;top:792.8px;width:15px;height:15px;background:#c4d3f8;border-radius:1.5px"><svg style="left:3px;top:5px" width="9" height="6"><path d="M1 0.8L4.5 4.3L8 0.8" fill="none" stroke="#27408b" stroke-width="1.9"/></svg></div>
<div style="left:1067px;top:831px;width:210px;height:1px;border-top:1px dotted #c4c1b0"></div>
<span class="t" style="left:1082px;top:814.2px;max-width:82.5px;overflow:hidden">Date Last Modified</span>
<div style="left:1259px;top:813.8px;width:15px;height:15px;background:#c4d3f8;border-radius:1.5px"><svg style="left:3px;top:5px" width="9" height="6"><path d="M1 0.8L4.5 4.3L8 0.8" fill="none" stroke="#27408b" stroke-width="1.9"/></svg></div>
<div style="left:1067px;top:852px;width:210px;height:1px;border-top:1px dotted #c4c1b0"></div>
<span class="t" style="left:1082px;top:835.2px;max-width:82.5px;overflow:hidden">Date Opened</span>
<div style="left:1259px;top:834.8px;width:15px;height:15px;background:#c4d3f8;border-radius:1.5px"><svg style="left:3px;top:5px" width="9" height="6"><path d="M1 0.8L4.5 4.3L8 0.8" fill="none" stroke="#27408b" stroke-width="1.9"/></svg></div>
<div style="left:1067px;top:873px;width:210px;height:1px;border-top:1px dotted #c4c1b0"></div>
<span class="t" style="left:1082px;top:856.2px;max-width:82.5px;overflow:hidden">Date Completed</span>
<div style="left:1259px;top:855.8px;width:15px;height:15px;background:#c4d3f8;border-radius:1.5px"><svg style="left:3px;top:5px" width="9" height="6"><path d="M1 0.8L4.5 4.3L8 0.8" fill="none" stroke="#27408b" stroke-width="1.9"/></svg></div>
<div style="left:1165.5px;top:685px;width:1px;height:189px;background:#aeab9b"></div>
<div style="left:1067px;top:873px;width:210px;height:1px;background:#c2bfaf"></div>
<div style="left:0;top:974.5px;width:1280px;height:20px;background:linear-gradient(#f1efe3,#ebe8d7 50%,#e6e3d0)"></div>
</div></body></html>
